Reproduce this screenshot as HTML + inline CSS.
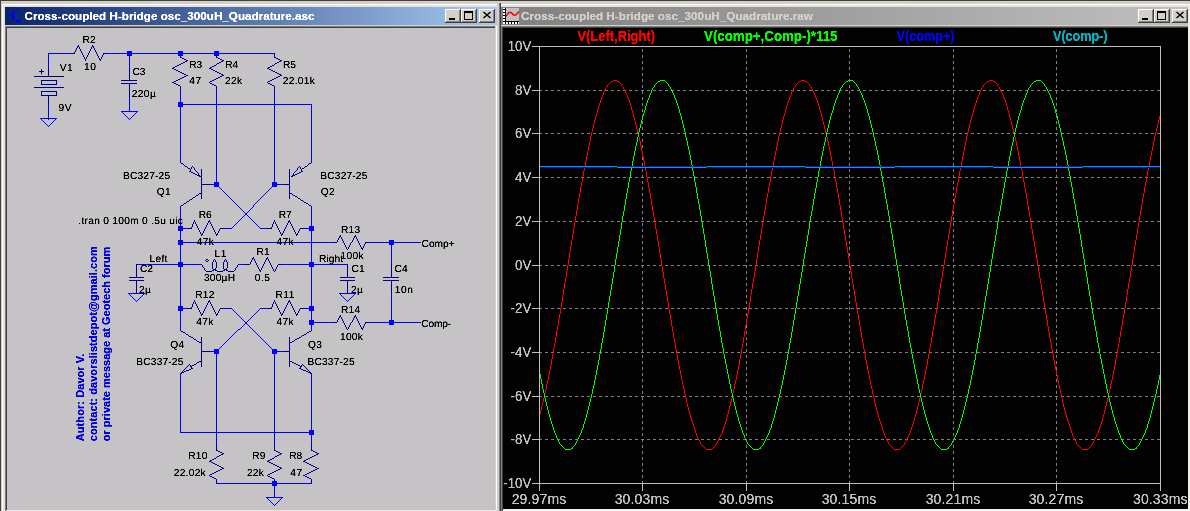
<!DOCTYPE html>
<html lang="en"><head><meta charset="utf-8"><title>LTspice - Cross-coupled H-bridge osc_300uH_Quadrature</title>
<style>
html,body{margin:0;padding:0;background:#d4d0c8;overflow:hidden}
svg{display:block;will-change:transform}
text{font-family:"Liberation Sans",sans-serif}
.lbl{font-size:10.2px;fill:#000;text-rendering:geometricPrecision}
.ttl{font-size:11px;font-weight:bold}
.ax{font-size:14px;fill:#c0c0c0}
.lg{font-size:14px;font-weight:bold}
.auth{font-size:11px;font-weight:bold;fill:#0000e0}
</style></head><body>
<svg width="1190" height="511" viewBox="0 0 1190 511">
<defs>
<linearGradient id="ga" x1="0" x2="1" y1="0" y2="0"><stop offset="0" stop-color="#0a246a"/><stop offset="1" stop-color="#a6caf0"/></linearGradient>
<linearGradient id="gi" x1="0" x2="1" y1="0" y2="0"><stop offset="0" stop-color="#808080"/><stop offset="1" stop-color="#c0c0c0"/></linearGradient>
<filter id="th" x="0" y="0" width="1190" height="511" filterUnits="userSpaceOnUse" color-interpolation-filters="sRGB"><feComponentTransfer><feFuncA type="linear" slope="1.7" intercept="-0.1"/></feComponentTransfer></filter>
</defs>
<rect x="0" y="0" width="1190" height="511" fill="#d4d0c8"/>
<g shape-rendering="crispEdges">
<rect x="0" y="0" width="1190" height="1" fill="#404040"/>
<rect x="0" y="0" width="1" height="511" fill="#404040"/>
<rect x="1" y="1" width="498" height="510" fill="#d4d0c8"/>
<rect x="2" y="4" width="495" height="1" fill="#ffffff"/>
<rect x="2" y="4" width="1" height="507" fill="#ffffff"/>
<rect x="3" y="5" width="494" height="2" fill="#e6e3dc"/>
<rect x="3" y="5" width="2" height="506" fill="#e6e3dc"/>
<rect x="499" y="3" width="1" height="508" fill="#808080"/>
<rect x="500" y="3" width="1" height="508" fill="#404040"/>
<rect x="5" y="7" width="492" height="18" fill="url(#ga)"/>
<rect x="5" y="26" width="492" height="485" fill="#808080"/>
<rect x="6" y="27" width="491" height="484" fill="#404040"/>
<rect x="495" y="26" width="1" height="485" fill="#d4d0c8"/><rect x="496" y="26" width="1" height="485" fill="#ffffff"/>
<rect x="7" y="28" width="488" height="481.5" fill="#c6c3c6"/>
<rect x="6" y="509.5" width="491" height="2" fill="#e8e6e0"/>
<rect x="501" y="1" width="689" height="510" fill="#d4d0c8"/>
<rect x="501" y="4" width="689" height="1" fill="#ffffff"/>
<rect x="501" y="5" width="689" height="2" fill="#e6e3dc"/>
<rect x="501" y="7" width="687" height="18" fill="url(#gi)"/>
<rect x="501" y="26" width="689" height="1" fill="#808080"/>
<rect x="501" y="27" width="689" height="1" fill="#404040"/>
<rect x="501" y="26" width="1" height="485" fill="#808080"/>
<rect x="502" y="27" width="1" height="484" fill="#404040"/>
<rect x="503" y="28" width="685" height="481" fill="#020202"/>
<rect x="1188" y="7" width="2" height="504" fill="#f0efea"/>
<rect x="503" y="509" width="687" height="2" fill="#f4f4f0"/>
<rect x="445" y="9" width="16" height="14" fill="#404040"/><rect x="445" y="9" width="15" height="13" fill="#ffffff"/><rect x="446" y="10" width="14" height="12" fill="#808080"/><rect x="446" y="10" width="13" height="11" fill="#d4d0c8"/>
<rect x="461" y="9" width="16" height="14" fill="#404040"/><rect x="461" y="9" width="15" height="13" fill="#ffffff"/><rect x="462" y="10" width="14" height="12" fill="#808080"/><rect x="462" y="10" width="13" height="11" fill="#d4d0c8"/>
<rect x="479" y="9" width="16" height="14" fill="#404040"/><rect x="479" y="9" width="15" height="13" fill="#ffffff"/><rect x="480" y="10" width="14" height="12" fill="#808080"/><rect x="480" y="10" width="13" height="11" fill="#d4d0c8"/>
<rect x="1138" y="9" width="16" height="14" fill="#404040"/><rect x="1138" y="9" width="15" height="13" fill="#ffffff"/><rect x="1139" y="10" width="14" height="12" fill="#808080"/><rect x="1139" y="10" width="13" height="11" fill="#d4d0c8"/>
<rect x="1154" y="9" width="16" height="14" fill="#404040"/><rect x="1154" y="9" width="15" height="13" fill="#ffffff"/><rect x="1155" y="10" width="14" height="12" fill="#808080"/><rect x="1155" y="10" width="13" height="11" fill="#d4d0c8"/>
<rect x="1172" y="9" width="16" height="14" fill="#404040"/><rect x="1172" y="9" width="15" height="13" fill="#ffffff"/><rect x="1173" y="10" width="14" height="12" fill="#808080"/><rect x="1173" y="10" width="13" height="11" fill="#d4d0c8"/>
<rect x="449" y="18" width="6" height="2" fill="#000"/>
<rect x="1142" y="18" width="6" height="2" fill="#000"/>
<rect x="464" y="11" width="9" height="9" fill="#000"/><rect x="465" y="13" width="7" height="6" fill="#d4d0c8"/>
<rect x="1157" y="11" width="9" height="9" fill="#000"/><rect x="1158" y="13" width="7" height="6" fill="#d4d0c8"/>
</g>
<path d="M483.5 12 l7 6 M490.5 12 l-7 6" stroke="#000" stroke-width="1.5" fill="none"/>
<path d="M1176.5 12 l7 6 M1183.5 12 l-7 6" stroke="#000" stroke-width="1.5" fill="none"/>
<g stroke="#0000ff" fill="none" shape-rendering="crispEdges"><path d="M9 15.5H13" stroke-width="1"/><path d="M13 11V20" stroke-width="2"/><path d="M14 13L19 8" stroke-width="1"/><path d="M14 18L20 24" stroke-width="1"/><path d="M16 21.5h3v-3" stroke-width="1"/><path d="M17 20.5h2" stroke-width="1"/></g>
<text class="ttl" filter="url(#th)" x="24.5" y="20" fill="#fff" textLength="290" lengthAdjust="spacingAndGlyphs">Cross-coupled H-bridge osc_300uH_Quadrature.asc</text>
<g shape-rendering="crispEdges"><rect x="503" y="8" width="16" height="16" fill="#fff"/><rect x="506" y="8" width="13" height="13" fill="#c0c0c0"/>
<path fill="#000" d="M505 8h1v16h-1zM503 21h16v1h-16zM503 9h2v1h-2zM503 12h2v1h-2zM503 15h2v1h-2zM503 18h2v1h-2zM508 22h1v2h-1zM511 22h1v2h-1zM514 22h1v2h-1zM517 22h1v2h-1z"/></g>
<path d="M506 16.4L508.8 12.5H511L513.5 14.9H515.8L519 11.4" stroke="#ff0000" stroke-width="1.5" fill="none"/>
<text class="ttl" filter="url(#th)" x="521" y="20" fill="#d4d0c8" textLength="292" lengthAdjust="spacingAndGlyphs">Cross-coupled H-bridge osc_300uH_Quadrature.raw</text>
<g shape-rendering="crispEdges" stroke="none">
<path fill="#000080" d="M77 46h2v1h-2zM92 46h2v1h-2zM71 53h4v1h-4zM103 53h4v1h-4zM180 57h2v1h-2zM216 57h2v1h-2zM274 57h2v1h-2zM182 58h2v1h-2zM218 58h2v1h-2zM276 58h2v1h-2zM99 59h2v1h-2zM184 59h2v1h-2zM220 59h2v1h-2zM278 59h2v1h-2zM186 60h2v1h-2zM222 60h2v1h-2zM280 60h2v1h-2zM185 61h2v1h-2zM221 61h2v1h-2zM279 61h2v1h-2zM183 62h2v1h-2zM219 62h2v1h-2zM277 62h2v1h-2zM181 63h2v1h-2zM217 63h2v1h-2zM275 63h2v1h-2zM179 64h2v1h-2zM177 65h2v1h-2zM214 65h2v1h-2zM272 65h2v1h-2zM175 66h2v1h-2zM212 66h2v1h-2zM270 66h2v1h-2zM173 67h2v1h-2zM210 67h2v1h-2zM268 67h2v1h-2zM172 68h2v1h-2zM209 68h2v1h-2zM267 68h2v1h-2zM174 69h2v1h-2zM211 69h2v1h-2zM269 69h2v1h-2zM176 70h2v1h-2zM213 70h2v1h-2zM271 70h2v1h-2zM178 71h2v1h-2zM215 71h2v1h-2zM273 71h2v1h-2zM180 72h2v1h-2zM217 72h2v1h-2zM275 72h2v1h-2zM182 73h2v1h-2zM219 73h2v1h-2zM277 73h2v1h-2zM184 74h2v1h-2zM221 74h2v1h-2zM279 74h2v1h-2zM186 75h2v1h-2zM222 75h2v1h-2zM280 75h2v1h-2zM34 76h30v1h-30zM184 76h2v1h-2zM220 76h2v1h-2zM278 76h2v1h-2zM182 77h2v1h-2zM218 77h2v1h-2zM276 77h2v1h-2zM180 78h2v1h-2zM216 78h2v1h-2zM274 78h2v1h-2zM178 79h2v1h-2zM214 79h2v1h-2zM272 79h2v1h-2zM41 80h16v1h-16zM121 80h16v1h-16zM176 80h2v1h-2zM212 80h2v1h-2zM270 80h2v1h-2zM174 81h2v1h-2zM210 81h2v1h-2zM268 81h2v1h-2zM172 82h2v1h-2zM121 83h16v1h-16zM174 83h2v1h-2zM210 83h2v1h-2zM268 83h2v1h-2zM41 84h16v1h-16zM176 84h2v1h-2zM212 84h2v1h-2zM270 84h2v1h-2zM178 85h2v1h-2zM214 85h2v1h-2zM272 85h2v1h-2zM34 87h30v1h-30zM41 91h16v1h-16zM41 95h16v1h-16zM181 163h2v1h-2zM309 163h2v1h-2zM185 166h2v1h-2zM305 166h2v1h-2zM188 168h2v1h-2zM302 168h2v1h-2zM189 171h2v1h-2zM301 171h2v1h-2zM191 172h2v1h-2zM299 172h2v1h-2zM193 173h2v1h-2zM297 173h2v1h-2zM195 174h2v1h-2zM295 174h2v1h-2zM197 175h3v1h-3zM292 175h3v1h-3zM199 176h3v1h-3zM291 176h2v1h-2zM201 184h8v1h-8zM283 184h7v1h-7zM199 193h3v1h-3zM289 193h3v1h-3zM196 195h2v1h-2zM293 195h2v1h-2zM295 196h2v1h-2zM193 197h2v1h-2zM298 198h2v1h-2zM190 199h2v1h-2zM301 200h2v1h-2zM187 201h2v1h-2zM304 202h2v1h-2zM184 203h2v1h-2zM306 203h2v1h-2zM181 205h2v1h-2zM309 205h2v1h-2zM208 221h2v1h-2zM288 221h2v1h-2zM188 228h4v1h-4zM220 228h4v1h-4zM267 228h5v1h-5zM300 228h4v1h-4zM201 234h2v1h-2zM216 234h2v1h-2zM281 234h2v1h-2zM296 234h2v1h-2zM339 236h2v1h-2zM354 236h2v1h-2zM333 242h4v1h-4zM365 242h4v1h-4zM361 248h2v1h-2zM252 258h2v1h-2zM266 258h2v1h-2zM206 259h2v1h-2zM206 261h2v1h-2zM245 264h5v1h-5zM278 264h4v1h-4zM213 269h3v1h-3zM224 269h3v1h-3zM212 270h2v1h-2zM215 270h2v1h-2zM223 270h2v1h-2zM226 270h2v1h-2zM259 270h2v1h-2zM206 271h6v1h-6zM217 271h6v1h-6zM228 271h6v1h-6zM129 277h15v1h-15zM340 277h15v1h-15zM383 277h16v1h-16zM129 280h15v1h-15zM340 280h15v1h-15zM383 280h16v1h-16zM208 301h2v1h-2zM288 301h2v1h-2zM187 308h5v1h-5zM220 308h3v1h-3zM268 308h4v1h-4zM300 308h4v1h-4zM201 314h2v1h-2zM216 314h2v1h-2zM281 314h2v1h-2zM296 314h2v1h-2zM339 316h2v1h-2zM354 316h2v1h-2zM333 322h4v1h-4zM365 322h4v1h-4zM361 328h2v1h-2zM181 331h2v1h-2zM309 331h2v1h-2zM183 332h2v1h-2zM307 332h2v1h-2zM186 334h2v1h-2zM304 334h2v1h-2zM302 335h2v1h-2zM189 336h2v1h-2zM191 337h2v1h-2zM299 337h2v1h-2zM297 338h2v1h-2zM194 339h2v1h-2zM295 339h2v1h-2zM197 341h2v1h-2zM292 341h2v1h-2zM199 342h3v1h-3zM289 342h3v1h-3zM201 351h8v1h-8zM283 351h7v1h-7zM199 361h3v1h-3zM289 361h3v1h-3zM197 362h2v1h-2zM292 362h2v1h-2zM294 363h2v1h-2zM194 364h2v1h-2zM296 364h2v1h-2zM192 365h2v1h-2zM298 365h2v1h-2zM190 366h2v1h-2zM300 366h2v1h-2zM191 368h2v1h-2zM299 368h2v1h-2zM189 369h2v1h-2zM301 369h2v1h-2zM186 370h3v1h-3zM303 370h3v1h-3zM184 371h2v1h-2zM306 371h2v1h-2zM181 372h3v1h-3zM308 372h3v1h-3zM216 450h2v1h-2zM274 450h2v1h-2zM311 450h2v1h-2zM218 451h2v1h-2zM276 451h2v1h-2zM313 451h2v1h-2zM220 452h2v1h-2zM278 452h2v1h-2zM315 452h2v1h-2zM222 453h2v1h-2zM280 453h2v1h-2zM317 453h2v1h-2zM221 454h2v1h-2zM279 454h2v1h-2zM316 454h2v1h-2zM219 455h2v1h-2zM277 455h2v1h-2zM314 455h2v1h-2zM217 456h2v1h-2zM275 456h2v1h-2zM312 456h2v1h-2zM310 457h2v1h-2zM214 458h2v1h-2zM272 458h2v1h-2zM308 458h2v1h-2zM212 459h2v1h-2zM270 459h2v1h-2zM306 459h2v1h-2zM210 460h2v1h-2zM268 460h2v1h-2zM304 460h2v1h-2zM209 461h2v1h-2zM267 461h2v1h-2zM303 461h2v1h-2zM211 462h2v1h-2zM269 462h2v1h-2zM305 462h2v1h-2zM213 463h2v1h-2zM271 463h2v1h-2zM307 463h2v1h-2zM215 464h2v1h-2zM273 464h2v1h-2zM309 464h2v1h-2zM217 465h2v1h-2zM275 465h2v1h-2zM311 465h2v1h-2zM219 466h2v1h-2zM277 466h2v1h-2zM313 466h2v1h-2zM221 467h2v1h-2zM279 467h2v1h-2zM315 467h2v1h-2zM222 468h2v1h-2zM280 468h2v1h-2zM317 468h2v1h-2zM220 469h2v1h-2zM278 469h2v1h-2zM315 469h2v1h-2zM218 470h2v1h-2zM276 470h2v1h-2zM313 470h2v1h-2zM216 471h2v1h-2zM274 471h2v1h-2zM311 471h2v1h-2zM214 472h2v1h-2zM272 472h2v1h-2zM309 472h2v1h-2zM212 473h2v1h-2zM270 473h2v1h-2zM307 473h2v1h-2zM210 474h2v1h-2zM268 474h2v1h-2zM305 474h2v1h-2zM303 475h2v1h-2zM210 476h2v1h-2zM268 476h2v1h-2zM305 476h2v1h-2zM212 477h2v1h-2zM270 477h2v1h-2zM307 477h2v1h-2zM214 478h2v1h-2zM272 478h2v1h-2zM309 478h2v1h-2zM41 81h1v3h-1zM41 92h1v3h-1zM48 68h1v8h-1zM48 96h1v8h-1zM56 81h1v3h-1zM56 92h1v3h-1zM74 52h1v1h-1zM75 50h1v2h-1zM76 48h1v2h-1zM77 47h1v1h-1zM78 45h1v1h-1zM79 47h1v2h-1zM80 49h1v2h-1zM81 51h1v2h-1zM82 53h1v2h-1zM83 55h1v2h-1zM84 57h1v2h-1zM85 59h1v2h-1zM86 57h1v2h-1zM87 55h1v2h-1zM88 53h1v2h-1zM89 51h1v2h-1zM90 49h1v2h-1zM91 47h1v2h-1zM92 45h1v1h-1zM93 47h1v1h-1zM94 48h1v2h-1zM95 50h1v2h-1zM96 52h1v2h-1zM97 54h1v2h-1zM98 56h1v2h-1zM99 58h1v1h-1zM100 60h1v1h-1zM101 57h1v2h-1zM102 55h1v2h-1zM103 54h1v1h-1zM129 68h1v12h-1zM129 84h1v13h-1zM136 264h1v13h-1zM136 281h1v12h-1zM180 56h1v1h-1zM180 86h1v3h-1zM180 162h1v1h-1zM180 330h1v1h-1zM181 373h1v1h-1zM182 371h1v1h-1zM183 164h1v1h-1zM183 204h1v1h-1zM183 370h1v1h-1zM184 165h1v1h-1zM184 369h1v1h-1zM185 333h1v1h-1zM185 368h1v1h-1zM186 202h1v1h-1zM186 367h1v1h-1zM187 167h1v1h-1zM187 366h1v1h-1zM188 335h1v1h-1zM188 365h1v1h-1zM189 200h1v1h-1zM189 364h1v1h-1zM190 169h1v2h-1zM190 365h1v1h-1zM191 167h1v2h-1zM191 227h1v1h-1zM191 307h1v1h-1zM191 367h1v1h-1zM192 166h1v1h-1zM192 198h1v1h-1zM192 224h1v3h-1zM192 304h1v3h-1zM193 167h1v1h-1zM193 222h1v2h-1zM193 302h1v2h-1zM193 338h1v1h-1zM194 168h1v2h-1zM194 220h1v2h-1zM194 300h1v2h-1zM195 170h1v1h-1zM195 196h1v1h-1zM195 222h1v2h-1zM195 302h1v2h-1zM196 171h1v1h-1zM196 224h1v2h-1zM196 304h1v2h-1zM196 340h1v1h-1zM196 363h1v1h-1zM197 172h1v1h-1zM197 226h1v2h-1zM197 306h1v2h-1zM198 173h1v2h-1zM198 194h1v1h-1zM198 228h1v2h-1zM198 308h1v2h-1zM199 230h1v2h-1zM199 310h1v2h-1zM200 232h1v2h-1zM200 312h1v2h-1zM201 169h1v7h-1zM201 177h1v7h-1zM201 185h1v8h-1zM201 194h1v5h-1zM201 235h1v1h-1zM201 315h1v1h-1zM201 337h1v5h-1zM201 343h1v8h-1zM201 352h1v9h-1zM201 362h1v5h-1zM202 233h1v1h-1zM202 265h1v2h-1zM202 313h1v1h-1zM203 231h1v2h-1zM203 267h1v1h-1zM203 311h1v2h-1zM204 229h1v2h-1zM204 268h1v2h-1zM204 309h1v2h-1zM205 227h1v2h-1zM205 260h1v1h-1zM205 270h1v1h-1zM205 307h1v2h-1zM206 225h1v2h-1zM206 305h1v2h-1zM207 223h1v2h-1zM207 303h1v2h-1zM208 222h1v1h-1zM208 260h1v1h-1zM208 302h1v1h-1zM209 82h1v1h-1zM209 220h1v1h-1zM209 300h1v1h-1zM209 475h1v1h-1zM210 222h1v2h-1zM210 302h1v2h-1zM211 224h1v2h-1zM211 304h1v2h-1zM212 226h1v2h-1zM212 262h1v7h-1zM212 306h1v2h-1zM213 228h1v2h-1zM213 260h1v2h-1zM213 308h1v2h-1zM214 230h1v2h-1zM214 259h1v1h-1zM214 310h1v2h-1zM215 232h1v2h-1zM215 260h1v2h-1zM215 268h1v1h-1zM215 312h1v2h-1zM216 56h1v1h-1zM216 64h1v1h-1zM216 86h1v3h-1zM216 235h1v1h-1zM216 262h1v6h-1zM216 315h1v1h-1zM216 446h1v4h-1zM216 457h1v1h-1zM216 479h1v4h-1zM217 233h1v1h-1zM217 313h1v1h-1zM218 231h1v2h-1zM218 311h1v2h-1zM219 229h1v2h-1zM219 309h1v2h-1zM223 262h1v7h-1zM224 260h1v2h-1zM225 259h1v1h-1zM226 260h1v2h-1zM226 268h1v1h-1zM227 262h1v6h-1zM234 270h1v1h-1zM235 268h1v2h-1zM236 267h1v1h-1zM237 265h1v2h-1zM238 264h1v1h-1zM250 262h1v2h-1zM251 260h1v2h-1zM252 259h1v1h-1zM253 257h1v1h-1zM254 259h1v2h-1zM255 261h1v2h-1zM256 263h1v2h-1zM257 265h1v2h-1zM258 267h1v2h-1zM259 269h1v1h-1zM260 271h1v1h-1zM261 268h1v2h-1zM262 266h1v2h-1zM263 264h1v2h-1zM264 262h1v2h-1zM265 260h1v2h-1zM266 259h1v1h-1zM267 82h1v1h-1zM267 257h1v1h-1zM267 475h1v1h-1zM268 259h1v2h-1zM269 261h1v2h-1zM270 263h1v2h-1zM271 227h1v1h-1zM271 265h1v2h-1zM271 307h1v1h-1zM272 224h1v3h-1zM272 267h1v2h-1zM272 304h1v3h-1zM273 222h1v2h-1zM273 269h1v2h-1zM273 302h1v2h-1zM274 53h1v4h-1zM274 64h1v1h-1zM274 86h1v3h-1zM274 220h1v2h-1zM274 271h1v1h-1zM274 300h1v2h-1zM274 446h1v4h-1zM274 457h1v1h-1zM274 479h1v2h-1zM275 222h1v2h-1zM275 269h1v2h-1zM275 302h1v2h-1zM276 224h1v2h-1zM276 267h1v2h-1zM276 304h1v2h-1zM277 226h1v2h-1zM277 265h1v2h-1zM277 306h1v2h-1zM278 228h1v2h-1zM278 308h1v2h-1zM279 230h1v2h-1zM279 310h1v2h-1zM280 232h1v2h-1zM280 312h1v2h-1zM281 235h1v1h-1zM281 315h1v1h-1zM282 233h1v1h-1zM282 313h1v1h-1zM283 231h1v2h-1zM283 311h1v2h-1zM284 229h1v2h-1zM284 309h1v2h-1zM285 227h1v2h-1zM285 307h1v2h-1zM286 225h1v2h-1zM286 305h1v2h-1zM287 223h1v2h-1zM287 303h1v2h-1zM288 222h1v1h-1zM288 302h1v1h-1zM289 169h1v15h-1zM289 185h1v8h-1zM289 194h1v5h-1zM289 220h1v1h-1zM289 300h1v1h-1zM289 337h1v5h-1zM289 343h1v8h-1zM289 352h1v9h-1zM289 362h1v5h-1zM290 222h1v2h-1zM290 302h1v2h-1zM291 224h1v2h-1zM291 304h1v2h-1zM292 194h1v1h-1zM292 226h1v2h-1zM292 306h1v2h-1zM293 173h1v2h-1zM293 228h1v2h-1zM293 308h1v2h-1zM294 172h1v1h-1zM294 230h1v2h-1zM294 310h1v2h-1zM294 340h1v1h-1zM295 171h1v1h-1zM295 232h1v2h-1zM295 312h1v2h-1zM296 170h1v1h-1zM296 235h1v1h-1zM296 315h1v1h-1zM297 168h1v2h-1zM297 197h1v1h-1zM297 233h1v1h-1zM297 313h1v1h-1zM298 167h1v1h-1zM298 231h1v2h-1zM298 311h1v2h-1zM299 166h1v1h-1zM299 229h1v2h-1zM299 309h1v2h-1zM300 167h1v2h-1zM300 199h1v1h-1zM300 367h1v1h-1zM301 169h1v2h-1zM301 336h1v1h-1zM301 365h1v1h-1zM302 364h1v1h-1zM303 201h1v1h-1zM303 365h1v1h-1zM304 167h1v1h-1zM304 366h1v1h-1zM305 367h1v1h-1zM306 333h1v1h-1zM306 368h1v1h-1zM307 165h1v1h-1zM307 369h1v1h-1zM308 164h1v1h-1zM308 204h1v1h-1zM308 370h1v1h-1zM309 371h1v1h-1zM310 373h1v1h-1zM311 162h1v1h-1zM311 330h1v1h-1zM311 446h1v4h-1zM311 479h1v4h-1zM337 240h1v2h-1zM337 320h1v2h-1zM338 238h1v2h-1zM338 318h1v2h-1zM339 237h1v1h-1zM339 317h1v1h-1zM340 235h1v1h-1zM340 315h1v1h-1zM341 237h1v2h-1zM341 317h1v2h-1zM342 239h1v2h-1zM342 319h1v2h-1zM343 241h1v2h-1zM343 321h1v2h-1zM344 243h1v2h-1zM344 323h1v2h-1zM345 245h1v2h-1zM345 325h1v2h-1zM346 247h1v2h-1zM346 327h1v2h-1zM347 249h1v1h-1zM347 264h1v13h-1zM347 281h1v12h-1zM347 329h1v1h-1zM348 247h1v2h-1zM348 327h1v2h-1zM349 245h1v2h-1zM349 325h1v2h-1zM350 243h1v2h-1zM350 323h1v2h-1zM351 242h1v1h-1zM351 322h1v1h-1zM352 240h1v2h-1zM352 320h1v2h-1zM353 238h1v2h-1zM353 318h1v2h-1zM354 237h1v1h-1zM354 317h1v1h-1zM355 235h1v1h-1zM355 315h1v1h-1zM356 237h1v2h-1zM356 317h1v2h-1zM357 239h1v2h-1zM357 319h1v2h-1zM358 241h1v2h-1zM358 321h1v2h-1zM359 243h1v2h-1zM359 323h1v2h-1zM360 245h1v2h-1zM360 325h1v2h-1zM361 247h1v1h-1zM361 327h1v1h-1zM362 249h1v1h-1zM362 329h1v1h-1zM363 246h1v2h-1zM363 326h1v2h-1zM364 244h1v2h-1zM364 324h1v2h-1zM365 243h1v1h-1zM365 323h1v1h-1zM391 264h1v13h-1zM391 281h1v12h-1z"/>
<path fill="#0000ff" d="M127 51h5v1h-5zM178 51h5v1h-5zM214 51h5v1h-5zM127 52h5v1h-5zM178 52h5v1h-5zM214 52h5v1h-5zM48 53h23v1h-23zM107 53h167v1h-167zM127 54h5v1h-5zM178 54h5v1h-5zM214 54h5v1h-5zM127 55h5v1h-5zM178 55h5v1h-5zM214 55h5v1h-5zM178 102h5v1h-5zM178 103h5v1h-5zM178 104h134v1h-134zM178 105h5v1h-5zM178 106h5v1h-5zM121 111h17v1h-17zM40 118h17v1h-17zM214 182h5v1h-5zM272 182h5v1h-5zM214 183h5v1h-5zM272 183h5v1h-5zM209 184h10v1h-10zM272 184h11v1h-11zM214 185h5v1h-5zM272 185h5v1h-5zM214 186h5v1h-5zM272 186h5v1h-5zM245 213h2v1h-2zM245 214h2v1h-2zM178 226h5v1h-5zM309 226h5v1h-5zM178 227h5v1h-5zM309 227h5v1h-5zM178 228h10v1h-10zM224 228h8v1h-8zM260 228h7v1h-7zM304 228h10v1h-10zM178 229h5v1h-5zM309 229h5v1h-5zM178 230h5v1h-5zM309 230h5v1h-5zM178 240h5v1h-5zM389 240h5v1h-5zM178 241h5v1h-5zM389 241h5v1h-5zM178 242h155v1h-155zM369 242h52v1h-52zM178 243h5v1h-5zM389 243h5v1h-5zM178 244h5v1h-5zM389 244h5v1h-5zM178 262h5v1h-5zM309 262h5v1h-5zM178 263h5v1h-5zM309 263h5v1h-5zM137 264h65v1h-65zM239 264h6v1h-6zM282 264h65v1h-65zM178 265h5v1h-5zM309 265h5v1h-5zM178 266h5v1h-5zM309 266h5v1h-5zM128 293h17v1h-17zM339 293h17v1h-17zM178 306h5v1h-5zM309 306h5v1h-5zM178 307h5v1h-5zM309 307h5v1h-5zM178 308h9v1h-9zM223 308h9v1h-9zM260 308h8v1h-8zM304 308h10v1h-10zM178 309h5v1h-5zM309 309h5v1h-5zM178 310h5v1h-5zM309 310h5v1h-5zM309 320h5v1h-5zM389 320h5v1h-5zM309 321h5v1h-5zM389 321h5v1h-5zM245 322h2v1h-2zM309 322h24v1h-24zM369 322h52v1h-52zM245 323h2v1h-2zM309 323h5v1h-5zM389 323h5v1h-5zM309 324h5v1h-5zM389 324h5v1h-5zM238 329h2v1h-2zM214 349h5v1h-5zM272 349h5v1h-5zM214 350h5v1h-5zM272 350h5v1h-5zM209 351h10v1h-10zM272 351h11v1h-11zM214 352h5v1h-5zM272 352h5v1h-5zM214 353h5v1h-5zM272 353h5v1h-5zM309 430h5v1h-5zM309 431h5v1h-5zM180 432h134v1h-134zM309 433h5v1h-5zM309 434h5v1h-5zM272 481h5v1h-5zM272 482h5v1h-5zM216 483h96v1h-96zM272 484h5v1h-5zM272 485h5v1h-5zM266 497h17v1h-17zM41 119h1v1h-1zM42 120h1v1h-1zM43 121h1v1h-1zM44 122h1v1h-1zM45 123h1v1h-1zM46 124h1v1h-1zM47 125h1v1h-1zM48 54h1v14h-1zM48 104h1v14h-1zM48 119h1v1h-1zM48 126h1v1h-1zM49 125h1v1h-1zM50 124h1v1h-1zM51 123h1v1h-1zM52 122h1v1h-1zM53 121h1v1h-1zM54 120h1v1h-1zM55 119h1v1h-1zM122 112h1v1h-1zM123 113h1v1h-1zM124 114h1v1h-1zM125 115h1v1h-1zM126 116h1v1h-1zM127 117h1v1h-1zM128 118h1v1h-1zM129 56h1v12h-1zM129 97h1v14h-1zM129 119h1v1h-1zM129 294h1v1h-1zM130 118h1v1h-1zM130 295h1v1h-1zM131 117h1v1h-1zM131 296h1v1h-1zM132 116h1v1h-1zM132 297h1v1h-1zM133 115h1v1h-1zM133 298h1v1h-1zM134 114h1v1h-1zM134 299h1v1h-1zM135 113h1v1h-1zM135 300h1v1h-1zM136 112h1v1h-1zM136 301h1v1h-1zM137 300h1v1h-1zM138 299h1v1h-1zM139 298h1v1h-1zM140 297h1v1h-1zM141 296h1v1h-1zM142 295h1v1h-1zM143 294h1v1h-1zM180 89h1v13h-1zM180 107h1v55h-1zM180 206h1v20h-1zM180 231h1v9h-1zM180 245h1v17h-1zM180 267h1v39h-1zM180 311h1v19h-1zM180 373h1v59h-1zM216 89h1v15h-1zM216 105h1v77h-1zM216 354h1v78h-1zM216 433h1v13h-1zM219 187h1v1h-1zM219 348h1v1h-1zM220 188h1v1h-1zM220 347h1v1h-1zM221 189h1v1h-1zM221 346h1v1h-1zM222 190h1v1h-1zM222 345h1v1h-1zM223 191h1v1h-1zM223 344h1v1h-1zM224 192h1v1h-1zM224 343h1v1h-1zM225 193h1v1h-1zM225 342h1v1h-1zM226 194h1v1h-1zM226 341h1v1h-1zM227 195h1v1h-1zM227 340h1v1h-1zM228 196h1v1h-1zM228 339h1v1h-1zM229 197h1v1h-1zM229 338h1v1h-1zM230 198h1v1h-1zM230 337h1v1h-1zM231 199h1v1h-1zM231 336h1v1h-1zM232 200h1v1h-1zM232 227h1v1h-1zM232 309h1v1h-1zM232 335h1v1h-1zM233 201h1v1h-1zM233 226h1v1h-1zM233 310h1v1h-1zM233 334h1v1h-1zM234 202h1v1h-1zM234 225h1v1h-1zM234 311h1v1h-1zM234 333h1v1h-1zM235 203h1v1h-1zM235 224h1v1h-1zM235 312h1v1h-1zM235 332h1v1h-1zM236 204h1v1h-1zM236 223h1v1h-1zM236 313h1v1h-1zM236 331h1v1h-1zM237 205h1v1h-1zM237 222h1v1h-1zM237 314h1v1h-1zM237 330h1v1h-1zM238 206h1v1h-1zM238 221h1v1h-1zM238 315h1v1h-1zM239 207h1v1h-1zM239 220h1v1h-1zM239 316h1v1h-1zM240 208h1v1h-1zM240 219h1v1h-1zM240 317h1v1h-1zM240 328h1v1h-1zM241 209h1v1h-1zM241 218h1v1h-1zM241 318h1v1h-1zM241 327h1v1h-1zM242 210h1v1h-1zM242 217h1v1h-1zM242 319h1v1h-1zM242 326h1v1h-1zM243 211h1v1h-1zM243 216h1v1h-1zM243 320h1v1h-1zM243 325h1v1h-1zM244 212h1v1h-1zM244 215h1v1h-1zM244 321h1v1h-1zM244 324h1v1h-1zM247 212h1v1h-1zM247 215h1v1h-1zM247 321h1v1h-1zM247 324h1v1h-1zM248 211h1v1h-1zM248 216h1v1h-1zM248 320h1v1h-1zM248 325h1v1h-1zM249 210h1v1h-1zM249 217h1v1h-1zM249 319h1v1h-1zM249 326h1v1h-1zM250 209h1v1h-1zM250 218h1v1h-1zM250 318h1v1h-1zM250 327h1v1h-1zM251 208h1v1h-1zM251 219h1v1h-1zM251 317h1v1h-1zM251 328h1v1h-1zM252 207h1v1h-1zM252 220h1v1h-1zM252 316h1v1h-1zM252 329h1v1h-1zM253 205h1v2h-1zM253 221h1v1h-1zM253 315h1v1h-1zM253 330h1v1h-1zM254 204h1v1h-1zM254 222h1v1h-1zM254 314h1v1h-1zM254 331h1v1h-1zM255 203h1v1h-1zM255 223h1v1h-1zM255 313h1v1h-1zM255 332h1v1h-1zM256 202h1v1h-1zM256 224h1v1h-1zM256 312h1v1h-1zM256 333h1v1h-1zM257 201h1v1h-1zM257 225h1v1h-1zM257 311h1v1h-1zM257 334h1v1h-1zM258 200h1v1h-1zM258 226h1v1h-1zM258 310h1v1h-1zM258 335h1v1h-1zM259 199h1v1h-1zM259 227h1v1h-1zM259 309h1v1h-1zM259 336h1v1h-1zM260 198h1v1h-1zM260 337h1v1h-1zM261 197h1v1h-1zM261 338h1v1h-1zM262 196h1v1h-1zM262 339h1v1h-1zM263 195h1v1h-1zM263 340h1v1h-1zM264 194h1v1h-1zM264 341h1v1h-1zM265 193h1v1h-1zM265 342h1v1h-1zM266 192h1v1h-1zM266 343h1v1h-1zM267 191h1v1h-1zM267 344h1v1h-1zM267 498h1v1h-1zM268 190h1v1h-1zM268 345h1v1h-1zM268 499h1v1h-1zM269 189h1v1h-1zM269 346h1v1h-1zM269 500h1v1h-1zM270 188h1v1h-1zM270 347h1v1h-1zM270 501h1v1h-1zM271 187h1v1h-1zM271 348h1v1h-1zM271 502h1v1h-1zM272 503h1v1h-1zM273 504h1v1h-1zM274 89h1v15h-1zM274 105h1v77h-1zM274 354h1v78h-1zM274 433h1v13h-1zM274 486h1v11h-1zM274 505h1v1h-1zM275 504h1v1h-1zM276 503h1v1h-1zM277 502h1v1h-1zM278 501h1v1h-1zM279 500h1v1h-1zM280 499h1v1h-1zM281 498h1v1h-1zM311 105h1v57h-1zM311 206h1v20h-1zM311 231h1v11h-1zM311 243h1v19h-1zM311 267h1v39h-1zM311 311h1v9h-1zM311 325h1v5h-1zM311 373h1v57h-1zM311 435h1v11h-1zM340 294h1v1h-1zM341 295h1v1h-1zM342 296h1v1h-1zM343 297h1v1h-1zM344 298h1v1h-1zM345 299h1v1h-1zM346 300h1v1h-1zM347 301h1v1h-1zM348 300h1v1h-1zM349 299h1v1h-1zM350 298h1v1h-1zM351 297h1v1h-1zM352 296h1v1h-1zM353 295h1v1h-1zM354 294h1v1h-1zM391 245h1v19h-1zM391 293h1v27h-1z"/>
<path fill="#808080" d="M539 90h3v1h-3zM545 90h3v1h-3zM551 90h3v1h-3zM557 90h3v1h-3zM563 90h3v1h-3zM569 90h3v1h-3zM575 90h3v1h-3zM581 90h3v1h-3zM587 90h3v1h-3zM593 90h3v1h-3zM599 90h3v1h-3zM605 90h3v1h-3zM611 90h3v1h-3zM617 90h3v1h-3zM629 90h3v1h-3zM635 90h3v1h-3zM641 90h3v1h-3zM647 90h3v1h-3zM653 90h3v1h-3zM659 90h3v1h-3zM665 90h3v1h-3zM672 90h2v1h-2zM677 90h3v1h-3zM683 90h3v1h-3zM689 90h3v1h-3zM695 90h3v1h-3zM701 90h3v1h-3zM707 90h3v1h-3zM713 90h3v1h-3zM719 90h3v1h-3zM725 90h3v1h-3zM731 90h3v1h-3zM737 90h3v1h-3zM743 90h3v1h-3zM749 90h3v1h-3zM755 90h3v1h-3zM761 90h3v1h-3zM767 90h3v1h-3zM773 90h3v1h-3zM779 90h3v1h-3zM785 90h3v1h-3zM797 90h3v1h-3zM803 90h3v1h-3zM809 90h3v1h-3zM815 90h3v1h-3zM821 90h3v1h-3zM827 90h3v1h-3zM833 90h3v1h-3zM840 90h2v1h-2zM845 90h3v1h-3zM851 90h3v1h-3zM857 90h2v1h-2zM863 90h3v1h-3zM869 90h3v1h-3zM875 90h3v1h-3zM881 90h3v1h-3zM887 90h3v1h-3zM893 90h3v1h-3zM899 90h3v1h-3zM905 90h3v1h-3zM911 90h3v1h-3zM917 90h3v1h-3zM923 90h3v1h-3zM929 90h3v1h-3zM935 90h3v1h-3zM941 90h3v1h-3zM947 90h3v1h-3zM953 90h3v1h-3zM959 90h3v1h-3zM965 90h3v1h-3zM971 90h3v1h-3zM977 90h3v1h-3zM983 90h3v1h-3zM989 90h3v1h-3zM995 90h3v1h-3zM1001 90h3v1h-3zM1007 90h3v1h-3zM1013 90h3v1h-3zM1019 90h3v1h-3zM1025 90h2v1h-2zM1031 90h3v1h-3zM1037 90h3v1h-3zM1043 90h3v1h-3zM1049 90h3v1h-3zM1055 90h3v1h-3zM1061 90h3v1h-3zM1067 90h3v1h-3zM1073 90h3v1h-3zM1079 90h3v1h-3zM1085 90h3v1h-3zM1091 90h3v1h-3zM1097 90h3v1h-3zM1103 90h3v1h-3zM1109 90h3v1h-3zM1115 90h3v1h-3zM1121 90h3v1h-3zM1127 90h3v1h-3zM1133 90h3v1h-3zM1139 90h3v1h-3zM1145 90h3v1h-3zM1151 90h3v1h-3zM1157 90h3v1h-3zM539 133h3v1h-3zM545 133h3v1h-3zM551 133h3v1h-3zM557 133h3v1h-3zM563 133h3v1h-3zM569 133h3v1h-3zM575 133h3v1h-3zM581 133h3v1h-3zM587 133h3v1h-3zM593 133h3v1h-3zM599 133h3v1h-3zM605 133h3v1h-3zM611 133h3v1h-3zM617 133h3v1h-3zM623 133h3v1h-3zM629 133h3v1h-3zM635 133h3v1h-3zM641 133h3v1h-3zM647 133h3v1h-3zM653 133h3v1h-3zM659 133h3v1h-3zM665 133h3v1h-3zM671 133h3v1h-3zM677 133h3v1h-3zM683 133h2v1h-2zM689 133h3v1h-3zM695 133h3v1h-3zM701 133h3v1h-3zM707 133h3v1h-3zM713 133h3v1h-3zM719 133h3v1h-3zM725 133h3v1h-3zM731 133h3v1h-3zM737 133h3v1h-3zM743 133h4v1h-4zM749 133h3v1h-3zM755 133h3v1h-3zM761 133h3v1h-3zM767 133h3v1h-3zM773 133h3v1h-3zM780 133h2v1h-2zM785 133h3v1h-3zM791 133h3v1h-3zM797 133h3v1h-3zM803 133h3v1h-3zM809 133h3v1h-3zM815 133h3v1h-3zM821 133h3v1h-3zM827 133h3v1h-3zM833 133h3v1h-3zM839 133h3v1h-3zM845 133h3v1h-3zM851 133h3v1h-3zM857 133h3v1h-3zM863 133h3v1h-3zM869 133h3v1h-3zM875 133h3v1h-3zM881 133h3v1h-3zM887 133h3v1h-3zM893 133h3v1h-3zM899 133h3v1h-3zM905 133h3v1h-3zM911 133h3v1h-3zM917 133h3v1h-3zM923 133h3v1h-3zM929 133h3v1h-3zM935 133h3v1h-3zM941 133h3v1h-3zM947 133h3v1h-3zM953 133h3v1h-3zM959 133h3v1h-3zM965 133h2v1h-2zM971 133h3v1h-3zM977 133h3v1h-3zM983 133h3v1h-3zM989 133h3v1h-3zM995 133h3v1h-3zM1001 133h3v1h-3zM1007 133h3v1h-3zM1019 133h3v1h-3zM1025 133h3v1h-3zM1031 133h3v1h-3zM1037 133h3v1h-3zM1043 133h3v1h-3zM1049 133h3v1h-3zM1055 133h3v1h-3zM1062 133h2v1h-2zM1067 133h3v1h-3zM1073 133h3v1h-3zM1079 133h3v1h-3zM1085 133h3v1h-3zM1091 133h3v1h-3zM1097 133h3v1h-3zM1103 133h3v1h-3zM1109 133h3v1h-3zM1115 133h3v1h-3zM1121 133h3v1h-3zM1127 133h3v1h-3zM1133 133h3v1h-3zM1139 133h3v1h-3zM1145 133h3v1h-3zM1151 133h3v1h-3zM1157 133h3v1h-3zM539 177h3v1h-3zM545 177h3v1h-3zM551 177h3v1h-3zM557 177h3v1h-3zM563 177h3v1h-3zM569 177h3v1h-3zM575 177h3v1h-3zM587 177h3v1h-3zM593 177h3v1h-3zM599 177h3v1h-3zM605 177h3v1h-3zM611 177h3v1h-3zM617 177h3v1h-3zM623 177h3v1h-3zM630 177h2v1h-2zM635 177h3v1h-3zM641 177h3v1h-3zM648 177h2v1h-2zM653 177h3v1h-3zM659 177h3v1h-3zM665 177h3v1h-3zM671 177h3v1h-3zM677 177h3v1h-3zM683 177h3v1h-3zM689 177h3v1h-3zM695 177h3v1h-3zM701 177h3v1h-3zM707 177h3v1h-3zM713 177h3v1h-3zM719 177h3v1h-3zM725 177h3v1h-3zM731 177h3v1h-3zM737 177h3v1h-3zM743 177h4v1h-4zM749 177h3v1h-3zM755 177h3v1h-3zM761 177h3v1h-3zM767 177h3v1h-3zM773 177h3v1h-3zM779 177h3v1h-3zM785 177h3v1h-3zM791 177h3v1h-3zM797 177h3v1h-3zM803 177h3v1h-3zM809 177h3v1h-3zM815 177h2v1h-2zM821 177h3v1h-3zM827 177h3v1h-3zM833 177h2v1h-2zM839 177h3v1h-3zM845 177h3v1h-3zM851 177h3v1h-3zM857 177h3v1h-3zM863 177h3v1h-3zM869 177h3v1h-3zM875 177h3v1h-3zM887 177h3v1h-3zM893 177h3v1h-3zM899 177h3v1h-3zM905 177h3v1h-3zM911 177h3v1h-3zM917 177h3v1h-3zM923 177h3v1h-3zM929 177h3v1h-3zM935 177h3v1h-3zM941 177h3v1h-3zM947 177h3v1h-3zM953 177h3v1h-3zM959 177h3v1h-3zM965 177h3v1h-3zM971 177h3v1h-3zM977 177h3v1h-3zM983 177h3v1h-3zM989 177h3v1h-3zM995 177h3v1h-3zM1001 177h3v1h-3zM1007 177h3v1h-3zM1013 177h3v1h-3zM1019 177h3v1h-3zM1025 177h3v1h-3zM1031 177h3v1h-3zM1037 177h3v1h-3zM1043 177h3v1h-3zM1049 177h3v1h-3zM1055 177h3v1h-3zM1061 177h3v1h-3zM1067 177h3v1h-3zM1073 177h3v1h-3zM1079 177h3v1h-3zM1085 177h3v1h-3zM1091 177h3v1h-3zM1097 177h3v1h-3zM1103 177h3v1h-3zM1109 177h3v1h-3zM1115 177h3v1h-3zM1121 177h3v1h-3zM1127 177h3v1h-3zM1133 177h3v1h-3zM1139 177h3v1h-3zM1151 177h3v1h-3zM1157 177h3v1h-3zM539 221h3v1h-3zM545 221h3v1h-3zM551 221h3v1h-3zM557 221h3v1h-3zM563 221h3v1h-3zM569 221h3v1h-3zM576 221h2v1h-2zM581 221h3v1h-3zM587 221h3v1h-3zM593 221h3v1h-3zM599 221h3v1h-3zM605 221h3v1h-3zM611 221h3v1h-3zM617 221h3v1h-3zM623 221h3v1h-3zM629 221h3v1h-3zM635 221h3v1h-3zM641 221h3v1h-3zM647 221h3v1h-3zM659 221h3v1h-3zM665 221h3v1h-3zM671 221h3v1h-3zM677 221h3v1h-3zM683 221h3v1h-3zM689 221h3v1h-3zM695 221h3v1h-3zM702 221h2v1h-2zM707 221h3v1h-3zM713 221h3v1h-3zM719 221h3v1h-3zM725 221h3v1h-3zM731 221h3v1h-3zM737 221h3v1h-3zM743 221h3v1h-3zM749 221h3v1h-3zM755 221h3v1h-3zM761 221h2v1h-2zM767 221h3v1h-3zM773 221h3v1h-3zM779 221h3v1h-3zM785 221h3v1h-3zM791 221h3v1h-3zM797 221h3v1h-3zM803 221h3v1h-3zM815 221h3v1h-3zM821 221h3v1h-3zM827 221h3v1h-3zM833 221h3v1h-3zM839 221h3v1h-3zM845 221h3v1h-3zM851 221h3v1h-3zM857 221h3v1h-3zM863 221h3v1h-3zM869 221h3v1h-3zM875 221h3v1h-3zM881 221h3v1h-3zM887 221h2v1h-2zM893 221h3v1h-3zM899 221h3v1h-3zM905 221h3v1h-3zM911 221h3v1h-3zM917 221h3v1h-3zM923 221h3v1h-3zM929 221h3v1h-3zM935 221h3v1h-3zM941 221h3v1h-3zM947 221h3v1h-3zM953 221h3v1h-3zM959 221h3v1h-3zM965 221h3v1h-3zM971 221h3v1h-3zM977 221h3v1h-3zM983 221h3v1h-3zM989 221h3v1h-3zM995 221h3v1h-3zM1001 221h3v1h-3zM1007 221h3v1h-3zM1013 221h3v1h-3zM1019 221h3v1h-3zM1025 221h3v1h-3zM1031 221h3v1h-3zM1037 221h3v1h-3zM1043 221h3v1h-3zM1049 221h3v1h-3zM1055 221h3v1h-3zM1061 221h3v1h-3zM1067 221h3v1h-3zM1073 221h3v1h-3zM1079 221h3v1h-3zM1085 221h3v1h-3zM1091 221h3v1h-3zM1097 221h3v1h-3zM1103 221h3v1h-3zM1109 221h3v1h-3zM1115 221h3v1h-3zM1121 221h3v1h-3zM1127 221h3v1h-3zM1133 221h3v1h-3zM1140 221h2v1h-2zM1145 221h3v1h-3zM1151 221h3v1h-3zM1157 221h3v1h-3zM539 265h3v1h-3zM545 265h3v1h-3zM551 265h3v1h-3zM557 265h3v1h-3zM563 265h3v1h-3zM569 265h3v1h-3zM575 265h3v1h-3zM581 265h3v1h-3zM587 265h3v1h-3zM593 265h3v1h-3zM599 265h3v1h-3zM605 265h3v1h-3zM611 265h3v1h-3zM617 265h3v1h-3zM623 265h3v1h-3zM629 265h3v1h-3zM635 265h3v1h-3zM641 265h3v1h-3zM647 265h3v1h-3zM653 265h3v1h-3zM659 265h2v1h-2zM665 265h3v1h-3zM671 265h3v1h-3zM677 265h3v1h-3zM683 265h3v1h-3zM689 265h3v1h-3zM695 265h3v1h-3zM701 265h3v1h-3zM707 265h2v1h-2zM713 265h3v1h-3zM719 265h3v1h-3zM725 265h3v1h-3zM731 265h3v1h-3zM737 265h3v1h-3zM743 265h4v1h-4zM749 265h3v1h-3zM756 265h2v1h-2zM761 265h3v1h-3zM767 265h3v1h-3zM773 265h3v1h-3zM779 265h3v1h-3zM785 265h3v1h-3zM791 265h3v1h-3zM797 265h3v1h-3zM803 265h3v1h-3zM809 265h3v1h-3zM815 265h3v1h-3zM821 265h3v1h-3zM827 265h3v1h-3zM833 265h3v1h-3zM839 265h3v1h-3zM845 265h3v1h-3zM851 265h3v1h-3zM857 265h3v1h-3zM863 265h3v1h-3zM869 265h3v1h-3zM875 265h3v1h-3zM881 265h3v1h-3zM887 265h3v1h-3zM893 265h3v1h-3zM899 265h3v1h-3zM905 265h3v1h-3zM911 265h3v1h-3zM917 265h3v1h-3zM923 265h3v1h-3zM929 265h3v1h-3zM935 265h3v1h-3zM941 265h2v1h-2zM947 265h3v1h-3zM953 265h3v1h-3zM959 265h3v1h-3zM965 265h3v1h-3zM971 265h3v1h-3zM977 265h3v1h-3zM983 265h3v1h-3zM995 265h3v1h-3zM1001 265h3v1h-3zM1007 265h3v1h-3zM1013 265h3v1h-3zM1019 265h3v1h-3zM1025 265h3v1h-3zM1031 265h3v1h-3zM1038 265h2v1h-2zM1043 265h3v1h-3zM1049 265h3v1h-3zM1055 265h3v1h-3zM1061 265h3v1h-3zM1067 265h3v1h-3zM1073 265h3v1h-3zM1079 265h3v1h-3zM1086 265h2v1h-2zM1091 265h3v1h-3zM1097 265h3v1h-3zM1103 265h3v1h-3zM1109 265h3v1h-3zM1115 265h3v1h-3zM1121 265h3v1h-3zM1127 265h3v1h-3zM1133 265h3v1h-3zM1139 265h3v1h-3zM1145 265h3v1h-3zM1151 265h3v1h-3zM1157 265h3v1h-3zM539 308h3v1h-3zM545 308h3v1h-3zM551 308h3v1h-3zM557 308h3v1h-3zM563 308h3v1h-3zM569 308h3v1h-3zM575 308h3v1h-3zM581 308h3v1h-3zM587 308h3v1h-3zM593 308h3v1h-3zM599 308h3v1h-3zM605 308h2v1h-2zM611 308h3v1h-3zM617 308h3v1h-3zM623 308h3v1h-3zM629 308h3v1h-3zM635 308h3v1h-3zM641 308h3v1h-3zM647 308h3v1h-3zM653 308h3v1h-3zM659 308h3v1h-3zM665 308h3v1h-3zM671 308h3v1h-3zM677 308h3v1h-3zM683 308h3v1h-3zM689 308h3v1h-3zM695 308h3v1h-3zM701 308h3v1h-3zM707 308h3v1h-3zM713 308h3v1h-3zM719 308h3v1h-3zM725 308h3v1h-3zM731 308h3v1h-3zM737 308h3v1h-3zM743 308h4v1h-4zM749 308h3v1h-3zM755 308h3v1h-3zM761 308h3v1h-3zM767 308h3v1h-3zM773 308h3v1h-3zM779 308h3v1h-3zM785 308h3v1h-3zM791 308h3v1h-3zM797 308h3v1h-3zM803 308h3v1h-3zM809 308h3v1h-3zM815 308h3v1h-3zM821 308h3v1h-3zM827 308h3v1h-3zM833 308h3v1h-3zM839 308h3v1h-3zM845 308h3v1h-3zM851 308h3v1h-3zM857 308h3v1h-3zM863 308h3v1h-3zM869 308h3v1h-3zM875 308h3v1h-3zM881 308h3v1h-3zM887 308h3v1h-3zM893 308h3v1h-3zM899 308h3v1h-3zM905 308h3v1h-3zM911 308h3v1h-3zM917 308h3v1h-3zM923 308h3v1h-3zM929 308h3v1h-3zM941 308h3v1h-3zM947 308h3v1h-3zM953 308h3v1h-3zM959 308h3v1h-3zM965 308h3v1h-3zM971 308h3v1h-3zM977 308h3v1h-3zM984 308h2v1h-2zM989 308h3v1h-3zM995 308h3v1h-3zM1001 308h3v1h-3zM1007 308h3v1h-3zM1013 308h3v1h-3zM1019 308h3v1h-3zM1025 308h3v1h-3zM1031 308h3v1h-3zM1037 308h3v1h-3zM1049 308h3v1h-3zM1055 308h3v1h-3zM1061 308h3v1h-3zM1067 308h3v1h-3zM1073 308h3v1h-3zM1079 308h3v1h-3zM1085 308h3v1h-3zM1097 308h3v1h-3zM1103 308h3v1h-3zM1109 308h3v1h-3zM1115 308h3v1h-3zM1121 308h3v1h-3zM1127 308h3v1h-3zM1133 308h3v1h-3zM1139 308h3v1h-3zM1145 308h3v1h-3zM1151 308h3v1h-3zM1157 308h3v1h-3zM539 352h3v1h-3zM545 352h3v1h-3zM551 352h2v1h-2zM557 352h3v1h-3zM563 352h3v1h-3zM569 352h3v1h-3zM575 352h3v1h-3zM581 352h3v1h-3zM587 352h3v1h-3zM593 352h3v1h-3zM605 352h3v1h-3zM611 352h3v1h-3zM617 352h3v1h-3zM623 352h3v1h-3zM629 352h3v1h-3zM635 352h3v1h-3zM641 352h3v1h-3zM647 352h3v1h-3zM653 352h3v1h-3zM659 352h3v1h-3zM665 352h3v1h-3zM671 352h3v1h-3zM677 352h3v1h-3zM683 352h3v1h-3zM689 352h3v1h-3zM695 352h3v1h-3zM701 352h3v1h-3zM707 352h3v1h-3zM713 352h3v1h-3zM719 352h3v1h-3zM725 352h3v1h-3zM731 352h3v1h-3zM737 352h3v1h-3zM743 352h3v1h-3zM749 352h3v1h-3zM755 352h3v1h-3zM761 352h3v1h-3zM767 352h3v1h-3zM773 352h3v1h-3zM779 352h3v1h-3zM785 352h3v1h-3zM791 352h3v1h-3zM797 352h3v1h-3zM803 352h3v1h-3zM809 352h3v1h-3zM815 352h3v1h-3zM821 352h3v1h-3zM827 352h3v1h-3zM833 352h3v1h-3zM839 352h3v1h-3zM845 352h3v1h-3zM851 352h3v1h-3zM857 352h3v1h-3zM869 352h3v1h-3zM875 352h3v1h-3zM881 352h3v1h-3zM887 352h3v1h-3zM893 352h3v1h-3zM899 352h3v1h-3zM905 352h3v1h-3zM912 352h2v1h-2zM917 352h3v1h-3zM923 352h3v1h-3zM930 352h2v1h-2zM935 352h3v1h-3zM941 352h3v1h-3zM947 352h3v1h-3zM953 352h3v1h-3zM959 352h3v1h-3zM965 352h3v1h-3zM971 352h3v1h-3zM977 352h3v1h-3zM983 352h3v1h-3zM989 352h3v1h-3zM995 352h3v1h-3zM1001 352h3v1h-3zM1007 352h3v1h-3zM1013 352h3v1h-3zM1019 352h3v1h-3zM1025 352h3v1h-3zM1031 352h3v1h-3zM1037 352h3v1h-3zM1043 352h3v1h-3zM1049 352h3v1h-3zM1055 352h3v1h-3zM1061 352h3v1h-3zM1067 352h3v1h-3zM1073 352h3v1h-3zM1079 352h3v1h-3zM1085 352h3v1h-3zM1091 352h3v1h-3zM1097 352h2v1h-2zM1103 352h3v1h-3zM1109 352h3v1h-3zM1115 352h2v1h-2zM1121 352h3v1h-3zM1127 352h3v1h-3zM1133 352h3v1h-3zM1139 352h3v1h-3zM1145 352h3v1h-3zM1151 352h3v1h-3zM1157 352h3v1h-3zM539 396h3v1h-3zM545 396h3v1h-3zM551 396h3v1h-3zM557 396h3v1h-3zM563 396h3v1h-3zM569 396h3v1h-3zM575 396h3v1h-3zM581 396h3v1h-3zM587 396h3v1h-3zM593 396h3v1h-3zM599 396h3v1h-3zM605 396h3v1h-3zM611 396h3v1h-3zM617 396h3v1h-3zM623 396h3v1h-3zM629 396h3v1h-3zM635 396h3v1h-3zM641 396h3v1h-3zM647 396h3v1h-3zM653 396h3v1h-3zM659 396h3v1h-3zM665 396h3v1h-3zM671 396h3v1h-3zM677 396h3v1h-3zM683 396h2v1h-2zM689 396h3v1h-3zM695 396h3v1h-3zM701 396h3v1h-3zM707 396h3v1h-3zM713 396h3v1h-3zM719 396h3v1h-3zM725 396h3v1h-3zM737 396h3v1h-3zM743 396h3v1h-3zM749 396h3v1h-3zM755 396h3v1h-3zM761 396h3v1h-3zM767 396h3v1h-3zM773 396h3v1h-3zM780 396h2v1h-2zM785 396h3v1h-3zM791 396h3v1h-3zM797 396h3v1h-3zM803 396h3v1h-3zM809 396h3v1h-3zM815 396h3v1h-3zM821 396h3v1h-3zM827 396h3v1h-3zM833 396h3v1h-3zM839 396h3v1h-3zM845 396h3v1h-3zM851 396h3v1h-3zM857 396h3v1h-3zM863 396h3v1h-3zM869 396h3v1h-3zM875 396h3v1h-3zM881 396h3v1h-3zM887 396h3v1h-3zM893 396h3v1h-3zM899 396h3v1h-3zM905 396h3v1h-3zM911 396h3v1h-3zM917 396h3v1h-3zM923 396h3v1h-3zM929 396h3v1h-3zM935 396h3v1h-3zM941 396h3v1h-3zM947 396h3v1h-3zM953 396h3v1h-3zM959 396h3v1h-3zM965 396h2v1h-2zM971 396h3v1h-3zM977 396h3v1h-3zM983 396h3v1h-3zM989 396h3v1h-3zM995 396h3v1h-3zM1001 396h3v1h-3zM1007 396h3v1h-3zM1013 396h3v1h-3zM1019 396h3v1h-3zM1025 396h3v1h-3zM1031 396h3v1h-3zM1037 396h3v1h-3zM1043 396h3v1h-3zM1049 396h3v1h-3zM1055 396h3v1h-3zM1062 396h2v1h-2zM1067 396h3v1h-3zM1073 396h3v1h-3zM1079 396h3v1h-3zM1085 396h3v1h-3zM1091 396h3v1h-3zM1097 396h3v1h-3zM1103 396h3v1h-3zM1109 396h3v1h-3zM1115 396h3v1h-3zM1121 396h3v1h-3zM1127 396h3v1h-3zM1133 396h3v1h-3zM1139 396h3v1h-3zM1145 396h3v1h-3zM1151 396h3v1h-3zM1157 396h3v1h-3zM539 439h3v1h-3zM545 439h3v1h-3zM551 439h3v1h-3zM558 439h2v1h-2zM563 439h3v1h-3zM569 439h3v1h-3zM575 439h2v1h-2zM581 439h3v1h-3zM587 439h3v1h-3zM593 439h3v1h-3zM599 439h3v1h-3zM605 439h3v1h-3zM611 439h3v1h-3zM617 439h3v1h-3zM623 439h3v1h-3zM629 439h3v1h-3zM635 439h3v1h-3zM641 439h3v1h-3zM647 439h3v1h-3zM653 439h3v1h-3zM659 439h3v1h-3zM665 439h3v1h-3zM671 439h3v1h-3zM677 439h3v1h-3zM683 439h3v1h-3zM689 439h3v1h-3zM695 439h3v1h-3zM701 439h3v1h-3zM707 439h3v1h-3zM713 439h3v1h-3zM719 439h3v1h-3zM725 439h3v1h-3zM731 439h3v1h-3zM737 439h3v1h-3zM743 439h2v1h-2zM749 439h3v1h-3zM755 439h3v1h-3zM761 439h3v1h-3zM767 439h3v1h-3zM773 439h3v1h-3zM779 439h3v1h-3zM785 439h3v1h-3zM791 439h3v1h-3zM797 439h3v1h-3zM803 439h3v1h-3zM809 439h3v1h-3zM815 439h3v1h-3zM821 439h3v1h-3zM827 439h3v1h-3zM833 439h3v1h-3zM839 439h3v1h-3zM845 439h3v1h-3zM851 439h3v1h-3zM857 439h3v1h-3zM863 439h3v1h-3zM869 439h3v1h-3zM875 439h3v1h-3zM881 439h3v1h-3zM887 439h3v1h-3zM893 439h3v1h-3zM899 439h3v1h-3zM911 439h3v1h-3zM917 439h3v1h-3zM923 439h3v1h-3zM929 439h3v1h-3zM935 439h3v1h-3zM941 439h3v1h-3zM947 439h3v1h-3zM954 439h2v1h-2zM959 439h3v1h-3zM965 439h3v1h-3zM971 439h3v1h-3zM977 439h3v1h-3zM983 439h3v1h-3zM989 439h3v1h-3zM995 439h3v1h-3zM1001 439h3v1h-3zM1007 439h3v1h-3zM1013 439h3v1h-3zM1019 439h3v1h-3zM1025 439h3v1h-3zM1031 439h3v1h-3zM1037 439h3v1h-3zM1043 439h3v1h-3zM1049 439h3v1h-3zM1055 439h3v1h-3zM1061 439h3v1h-3zM1067 439h3v1h-3zM1079 439h3v1h-3zM1085 439h3v1h-3zM1091 439h3v1h-3zM1097 439h3v1h-3zM1103 439h3v1h-3zM1109 439h3v1h-3zM1115 439h3v1h-3zM1122 439h2v1h-2zM1127 439h3v1h-3zM1133 439h3v1h-3zM1139 439h2v1h-2zM1145 439h3v1h-3zM1151 439h3v1h-3zM1157 439h3v1h-3zM581 177h1v1h-1zM583 177h1v1h-1zM599 352h1v1h-1zM601 352h1v1h-1zM623 90h1v1h-1zM625 90h1v1h-1zM642 49h1v3h-1zM642 55h1v3h-1zM642 61h1v3h-1zM642 67h1v3h-1zM642 73h1v3h-1zM642 79h1v3h-1zM642 85h1v3h-1zM642 91h1v3h-1zM642 97h1v3h-1zM642 103h1v3h-1zM642 109h1v3h-1zM642 115h1v1h-1zM642 121h1v3h-1zM642 127h1v3h-1zM642 134h1v2h-1zM642 139h1v3h-1zM642 145h1v3h-1zM642 157h1v3h-1zM642 163h1v3h-1zM642 169h1v3h-1zM642 175h1v2h-1zM642 181h1v3h-1zM642 187h1v3h-1zM642 193h1v3h-1zM642 199h1v3h-1zM642 205h1v3h-1zM642 211h1v3h-1zM642 217h1v3h-1zM642 223h1v3h-1zM642 229h1v3h-1zM642 235h1v3h-1zM642 241h1v3h-1zM642 247h1v3h-1zM642 253h1v3h-1zM642 259h1v3h-1zM642 266h1v2h-1zM642 271h1v3h-1zM642 277h1v3h-1zM642 283h1v3h-1zM642 289h1v3h-1zM642 295h1v3h-1zM642 301h1v3h-1zM642 307h1v1h-1zM642 309h1v1h-1zM642 313h1v3h-1zM642 319h1v3h-1zM642 325h1v3h-1zM642 331h1v3h-1zM642 337h1v3h-1zM642 343h1v3h-1zM642 349h1v3h-1zM642 355h1v3h-1zM642 361h1v3h-1zM642 367h1v3h-1zM642 373h1v3h-1zM642 379h1v3h-1zM642 385h1v3h-1zM642 391h1v3h-1zM642 397h1v3h-1zM642 403h1v3h-1zM642 409h1v3h-1zM642 415h1v3h-1zM642 421h1v3h-1zM642 427h1v3h-1zM642 433h1v3h-1zM642 440h1v2h-1zM642 445h1v3h-1zM642 451h1v3h-1zM642 457h1v3h-1zM642 463h1v3h-1zM642 469h1v3h-1zM642 475h1v3h-1zM642 481h1v2h-1zM653 221h1v1h-1zM655 221h1v1h-1zM731 396h1v1h-1zM733 396h1v1h-1zM746 49h1v3h-1zM746 55h1v3h-1zM746 61h1v3h-1zM746 67h1v3h-1zM746 73h1v3h-1zM746 79h1v3h-1zM746 85h1v3h-1zM746 91h1v3h-1zM746 97h1v3h-1zM746 103h1v3h-1zM746 109h1v3h-1zM746 115h1v3h-1zM746 121h1v3h-1zM746 127h1v3h-1zM746 134h1v2h-1zM746 139h1v3h-1zM746 145h1v3h-1zM746 151h1v3h-1zM746 157h1v3h-1zM746 163h1v3h-1zM746 169h1v3h-1zM746 175h1v2h-1zM746 181h1v3h-1zM746 187h1v3h-1zM746 193h1v3h-1zM746 199h1v3h-1zM746 205h1v3h-1zM746 211h1v3h-1zM746 217h1v3h-1zM746 223h1v3h-1zM746 229h1v3h-1zM746 235h1v3h-1zM746 241h1v3h-1zM746 247h1v3h-1zM746 253h1v3h-1zM746 259h1v3h-1zM746 266h1v2h-1zM746 271h1v3h-1zM746 277h1v3h-1zM746 283h1v3h-1zM746 289h1v3h-1zM746 295h1v3h-1zM746 301h1v3h-1zM746 307h1v1h-1zM746 309h1v1h-1zM746 313h1v3h-1zM746 325h1v3h-1zM746 331h1v3h-1zM746 337h1v3h-1zM746 343h1v3h-1zM746 349h1v3h-1zM746 355h1v3h-1zM746 361h1v3h-1zM746 367h1v3h-1zM746 373h1v3h-1zM746 379h1v3h-1zM746 385h1v3h-1zM746 391h1v3h-1zM746 397h1v3h-1zM746 403h1v3h-1zM746 409h1v3h-1zM746 415h1v3h-1zM746 421h1v3h-1zM746 427h1v3h-1zM746 433h1v3h-1zM746 439h1v1h-1zM746 445h1v3h-1zM746 451h1v3h-1zM746 457h1v3h-1zM746 463h1v3h-1zM746 469h1v3h-1zM746 475h1v3h-1zM746 481h1v2h-1zM791 90h1v1h-1zM793 90h1v1h-1zM809 221h1v1h-1zM811 221h1v1h-1zM849 49h1v3h-1zM849 55h1v3h-1zM849 61h1v3h-1zM849 67h1v3h-1zM849 73h1v3h-1zM849 79h1v1h-1zM849 81h1v1h-1zM849 85h1v3h-1zM849 91h1v3h-1zM849 97h1v3h-1zM849 103h1v3h-1zM849 109h1v3h-1zM849 115h1v3h-1zM849 121h1v3h-1zM849 127h1v3h-1zM849 133h1v3h-1zM849 139h1v3h-1zM849 145h1v3h-1zM849 151h1v3h-1zM849 157h1v3h-1zM849 163h1v3h-1zM849 169h1v3h-1zM849 175h1v3h-1zM849 181h1v3h-1zM849 187h1v3h-1zM849 193h1v3h-1zM849 199h1v3h-1zM849 205h1v3h-1zM849 211h1v3h-1zM849 217h1v3h-1zM849 223h1v3h-1zM849 229h1v3h-1zM849 235h1v3h-1zM849 241h1v3h-1zM849 247h1v3h-1zM849 253h1v3h-1zM849 266h1v2h-1zM849 271h1v3h-1zM849 277h1v3h-1zM849 283h1v3h-1zM849 289h1v3h-1zM849 295h1v3h-1zM849 301h1v3h-1zM849 307h1v3h-1zM849 313h1v3h-1zM849 319h1v3h-1zM849 325h1v3h-1zM849 331h1v3h-1zM849 337h1v3h-1zM849 343h1v3h-1zM849 349h1v3h-1zM849 355h1v3h-1zM849 361h1v3h-1zM849 367h1v3h-1zM849 373h1v3h-1zM849 379h1v3h-1zM849 385h1v3h-1zM849 391h1v3h-1zM849 397h1v3h-1zM849 403h1v3h-1zM849 409h1v3h-1zM849 415h1v3h-1zM849 421h1v3h-1zM849 427h1v3h-1zM849 433h1v3h-1zM849 439h1v3h-1zM849 445h1v3h-1zM849 451h1v3h-1zM849 457h1v3h-1zM849 463h1v3h-1zM849 469h1v3h-1zM849 475h1v3h-1zM849 481h1v2h-1zM863 352h1v1h-1zM865 352h1v1h-1zM881 177h1v1h-1zM883 177h1v1h-1zM905 439h1v1h-1zM907 439h1v1h-1zM935 308h1v1h-1zM937 308h1v1h-1zM953 49h1v3h-1zM953 55h1v3h-1zM953 61h1v3h-1zM953 67h1v3h-1zM953 73h1v3h-1zM953 79h1v3h-1zM953 85h1v3h-1zM953 91h1v3h-1zM953 97h1v3h-1zM953 103h1v3h-1zM953 109h1v3h-1zM953 115h1v3h-1zM953 121h1v3h-1zM953 127h1v3h-1zM953 134h1v2h-1zM953 139h1v3h-1zM953 145h1v3h-1zM953 151h1v3h-1zM953 157h1v3h-1zM953 163h1v3h-1zM953 169h1v3h-1zM953 175h1v2h-1zM953 181h1v3h-1zM953 187h1v3h-1zM953 193h1v3h-1zM953 199h1v3h-1zM953 211h1v3h-1zM953 217h1v3h-1zM953 223h1v3h-1zM953 229h1v3h-1zM953 235h1v3h-1zM953 241h1v3h-1zM953 247h1v3h-1zM953 253h1v3h-1zM953 259h1v3h-1zM953 266h1v2h-1zM953 271h1v3h-1zM953 277h1v3h-1zM953 283h1v3h-1zM953 289h1v3h-1zM953 295h1v3h-1zM953 301h1v3h-1zM953 307h1v1h-1zM953 309h1v1h-1zM953 313h1v3h-1zM953 319h1v3h-1zM953 325h1v3h-1zM953 331h1v3h-1zM953 337h1v3h-1zM953 343h1v3h-1zM953 349h1v3h-1zM953 355h1v3h-1zM953 361h1v3h-1zM953 367h1v3h-1zM953 373h1v3h-1zM953 379h1v3h-1zM953 385h1v3h-1zM953 391h1v3h-1zM953 397h1v3h-1zM953 403h1v3h-1zM953 409h1v3h-1zM953 415h1v3h-1zM953 421h1v3h-1zM953 427h1v3h-1zM953 433h1v3h-1zM953 441h1v1h-1zM953 445h1v3h-1zM953 451h1v3h-1zM953 457h1v3h-1zM953 463h1v3h-1zM953 469h1v3h-1zM953 475h1v3h-1zM953 481h1v2h-1zM989 265h1v1h-1zM991 265h1v1h-1zM1013 133h1v1h-1zM1015 133h1v1h-1zM1043 308h1v1h-1zM1045 308h1v1h-1zM1056 49h1v3h-1zM1056 55h1v3h-1zM1056 61h1v3h-1zM1056 67h1v3h-1zM1056 73h1v3h-1zM1056 79h1v3h-1zM1056 85h1v3h-1zM1056 91h1v3h-1zM1056 97h1v3h-1zM1056 103h1v3h-1zM1056 109h1v3h-1zM1056 116h1v2h-1zM1056 121h1v3h-1zM1056 127h1v3h-1zM1056 134h1v2h-1zM1056 139h1v3h-1zM1056 145h1v3h-1zM1056 151h1v3h-1zM1056 157h1v3h-1zM1056 163h1v3h-1zM1056 169h1v3h-1zM1056 175h1v2h-1zM1056 181h1v3h-1zM1056 187h1v3h-1zM1056 193h1v3h-1zM1056 199h1v3h-1zM1056 205h1v3h-1zM1056 211h1v3h-1zM1056 217h1v3h-1zM1056 223h1v3h-1zM1056 229h1v3h-1zM1056 235h1v3h-1zM1056 241h1v3h-1zM1056 247h1v3h-1zM1056 253h1v3h-1zM1056 259h1v3h-1zM1056 266h1v2h-1zM1056 271h1v3h-1zM1056 277h1v3h-1zM1056 283h1v3h-1zM1056 289h1v3h-1zM1056 295h1v3h-1zM1056 301h1v3h-1zM1056 307h1v1h-1zM1056 309h1v1h-1zM1056 313h1v3h-1zM1056 319h1v3h-1zM1056 325h1v3h-1zM1056 331h1v3h-1zM1056 337h1v3h-1zM1056 343h1v3h-1zM1056 349h1v3h-1zM1056 355h1v3h-1zM1056 361h1v3h-1zM1056 367h1v3h-1zM1056 375h1v1h-1zM1056 379h1v3h-1zM1056 385h1v3h-1zM1056 391h1v3h-1zM1056 397h1v3h-1zM1056 403h1v3h-1zM1056 409h1v3h-1zM1056 415h1v3h-1zM1056 421h1v3h-1zM1056 427h1v3h-1zM1056 433h1v3h-1zM1056 440h1v2h-1zM1056 445h1v3h-1zM1056 451h1v3h-1zM1056 457h1v3h-1zM1056 463h1v3h-1zM1056 469h1v3h-1zM1056 475h1v3h-1zM1056 481h1v2h-1zM1073 439h1v1h-1zM1075 439h1v1h-1zM1091 308h1v1h-1zM1093 308h1v1h-1zM1145 177h1v1h-1zM1147 177h1v1h-1z"/>
<path fill="#ff0000" d="M613 80h4v1h-4zM801 80h4v1h-4zM989 80h4v1h-4zM611 81h2v1h-2zM617 81h2v1h-2zM799 81h2v1h-2zM805 81h2v1h-2zM987 81h2v1h-2zM993 81h2v1h-2zM706 449h6v1h-6zM894 449h6v1h-6zM1082 449h6v1h-6zM539 414h1v2h-1zM540 410h1v4h-1zM541 406h1v4h-1zM542 402h1v4h-1zM543 398h1v4h-1zM545 389h1v4h-1zM546 384h1v5h-1zM547 380h1v4h-1zM548 375h1v5h-1zM549 370h1v5h-1zM550 365h1v5h-1zM551 359h1v6h-1zM552 354h1v5h-1zM553 348h1v6h-1zM554 343h1v5h-1zM555 337h1v6h-1zM556 331h1v6h-1zM557 325h1v6h-1zM558 319h1v6h-1zM559 314h1v5h-1zM560 308h1v6h-1zM561 302h1v6h-1zM562 295h1v7h-1zM563 289h1v6h-1zM564 283h1v6h-1zM565 277h1v6h-1zM566 271h1v6h-1zM567 265h1v6h-1zM568 259h1v6h-1zM569 252h1v7h-1zM570 246h1v6h-1zM571 240h1v6h-1zM572 234h1v6h-1zM573 228h1v6h-1zM574 222h1v6h-1zM575 216h1v6h-1zM576 210h1v6h-1zM577 204h1v6h-1zM578 198h1v6h-1zM579 193h1v5h-1zM580 187h1v6h-1zM581 182h1v5h-1zM582 176h1v6h-1zM583 171h1v5h-1zM584 168h1v3h-1zM585 161h1v5h-1zM586 156h1v5h-1zM587 151h1v5h-1zM588 146h1v5h-1zM589 141h1v5h-1zM590 136h1v5h-1zM591 132h1v4h-1zM592 128h1v4h-1zM593 124h1v4h-1zM594 120h1v4h-1zM595 116h1v4h-1zM596 113h1v3h-1zM597 109h1v4h-1zM598 106h1v3h-1zM599 103h1v3h-1zM600 100h1v3h-1zM601 97h1v3h-1zM602 95h1v2h-1zM603 92h1v3h-1zM604 90h1v2h-1zM605 88h1v2h-1zM606 87h1v1h-1zM607 85h1v2h-1zM608 84h1v1h-1zM609 83h1v1h-1zM610 82h1v1h-1zM619 82h1v1h-1zM620 83h1v1h-1zM621 84h1v2h-1zM622 86h1v1h-1zM623 87h1v2h-1zM624 89h1v2h-1zM625 91h1v2h-1zM626 93h1v2h-1zM627 95h1v3h-1zM628 98h1v2h-1zM629 100h1v3h-1zM630 103h1v3h-1zM631 106h1v4h-1zM632 110h1v3h-1zM633 113h1v4h-1zM634 117h1v4h-1zM635 121h1v4h-1zM636 125h1v4h-1zM637 129h1v4h-1zM639 137h1v4h-1zM640 141h1v5h-1zM641 146h1v5h-1zM642 151h1v5h-1zM643 156h1v5h-1zM644 161h1v5h-1zM645 168h1v3h-1zM646 171h1v6h-1zM647 177h1v5h-1zM648 182h1v6h-1zM649 188h1v5h-1zM650 193h1v6h-1zM651 199h1v6h-1zM652 205h1v6h-1zM653 211h1v6h-1zM654 217h1v6h-1zM655 223h1v6h-1zM656 229h1v6h-1zM657 235h1v6h-1zM658 241h1v6h-1zM659 247h1v6h-1zM660 253h1v6h-1zM661 259h1v7h-1zM662 266h1v6h-1zM663 272h1v6h-1zM664 278h1v6h-1zM665 284h1v6h-1zM666 290h1v6h-1zM667 296h1v6h-1zM668 302h1v7h-1zM669 309h1v5h-1zM670 314h1v6h-1zM671 320h1v6h-1zM672 326h1v6h-1zM673 332h1v6h-1zM674 338h1v5h-1zM675 343h1v6h-1zM676 349h1v5h-1zM677 354h1v6h-1zM678 360h1v5h-1zM679 365h1v5h-1zM680 370h1v5h-1zM681 375h1v5h-1zM682 380h1v5h-1zM683 385h1v4h-1zM684 389h1v5h-1zM685 394h1v4h-1zM686 398h1v5h-1zM687 403h1v4h-1zM688 407h1v4h-1zM689 411h1v3h-1zM690 414h1v4h-1zM691 418h1v3h-1zM692 421h1v3h-1zM693 424h1v3h-1zM694 427h1v3h-1zM695 430h1v3h-1zM696 433h1v3h-1zM697 436h1v2h-1zM698 438h1v2h-1zM699 440h1v2h-1zM700 442h1v2h-1zM701 444h1v1h-1zM702 445h1v1h-1zM703 446h1v1h-1zM704 447h1v1h-1zM705 448h1v1h-1zM712 448h1v1h-1zM713 447h1v1h-1zM714 446h1v1h-1zM715 445h1v1h-1zM716 443h1v2h-1zM717 441h1v2h-1zM718 439h1v2h-1zM719 437h1v2h-1zM720 435h1v2h-1zM721 433h1v2h-1zM722 430h1v3h-1zM723 427h1v3h-1zM724 424h1v3h-1zM725 421h1v3h-1zM726 417h1v4h-1zM727 414h1v3h-1zM728 410h1v4h-1zM729 406h1v4h-1zM730 402h1v4h-1zM731 398h1v4h-1zM733 389h1v4h-1zM734 384h1v5h-1zM735 380h1v4h-1zM736 375h1v5h-1zM737 370h1v5h-1zM738 365h1v5h-1zM739 359h1v6h-1zM740 354h1v5h-1zM741 348h1v6h-1zM742 343h1v5h-1zM743 337h1v6h-1zM744 331h1v6h-1zM745 325h1v6h-1zM746 319h1v6h-1zM747 314h1v5h-1zM748 308h1v6h-1zM749 302h1v6h-1zM750 295h1v7h-1zM751 289h1v6h-1zM752 283h1v6h-1zM753 277h1v6h-1zM754 271h1v6h-1zM755 265h1v6h-1zM756 259h1v6h-1zM757 252h1v7h-1zM758 246h1v6h-1zM759 240h1v6h-1zM760 234h1v6h-1zM761 228h1v6h-1zM762 222h1v6h-1zM763 216h1v6h-1zM764 210h1v6h-1zM765 204h1v6h-1zM766 198h1v6h-1zM767 193h1v5h-1zM768 187h1v6h-1zM769 182h1v5h-1zM770 176h1v6h-1zM771 171h1v5h-1zM772 168h1v3h-1zM773 161h1v5h-1zM774 156h1v5h-1zM775 151h1v5h-1zM776 146h1v5h-1zM777 141h1v5h-1zM778 136h1v5h-1zM779 132h1v4h-1zM780 128h1v4h-1zM781 124h1v4h-1zM782 120h1v4h-1zM783 116h1v4h-1zM784 113h1v3h-1zM785 109h1v4h-1zM786 106h1v3h-1zM787 103h1v3h-1zM788 100h1v3h-1zM789 97h1v3h-1zM790 95h1v2h-1zM791 92h1v3h-1zM792 90h1v2h-1zM793 88h1v2h-1zM794 87h1v1h-1zM795 85h1v2h-1zM796 84h1v1h-1zM797 83h1v1h-1zM798 82h1v1h-1zM807 82h1v1h-1zM808 83h1v1h-1zM809 84h1v2h-1zM810 86h1v1h-1zM811 87h1v2h-1zM812 89h1v2h-1zM813 91h1v2h-1zM814 93h1v2h-1zM815 95h1v3h-1zM816 98h1v2h-1zM817 100h1v3h-1zM818 103h1v3h-1zM819 106h1v4h-1zM820 110h1v3h-1zM821 113h1v4h-1zM822 117h1v4h-1zM823 121h1v4h-1zM824 125h1v4h-1zM825 129h1v4h-1zM827 137h1v4h-1zM828 141h1v5h-1zM829 146h1v5h-1zM830 151h1v5h-1zM831 156h1v5h-1zM832 161h1v5h-1zM833 168h1v3h-1zM834 171h1v6h-1zM835 177h1v5h-1zM836 182h1v6h-1zM837 188h1v5h-1zM838 193h1v6h-1zM839 199h1v6h-1zM840 205h1v6h-1zM841 211h1v6h-1zM842 217h1v6h-1zM843 223h1v6h-1zM844 229h1v6h-1zM845 235h1v6h-1zM846 241h1v6h-1zM847 247h1v6h-1zM848 253h1v6h-1zM849 259h1v7h-1zM850 266h1v6h-1zM851 272h1v6h-1zM852 278h1v6h-1zM853 284h1v6h-1zM854 290h1v6h-1zM855 296h1v6h-1zM856 302h1v7h-1zM857 309h1v5h-1zM858 314h1v6h-1zM859 320h1v6h-1zM860 326h1v6h-1zM861 332h1v6h-1zM862 338h1v5h-1zM863 343h1v6h-1zM864 349h1v5h-1zM865 354h1v6h-1zM866 360h1v5h-1zM867 365h1v5h-1zM868 370h1v5h-1zM869 375h1v5h-1zM870 380h1v5h-1zM871 385h1v4h-1zM872 389h1v5h-1zM873 394h1v4h-1zM874 398h1v5h-1zM875 403h1v4h-1zM876 407h1v4h-1zM877 411h1v3h-1zM878 414h1v4h-1zM879 418h1v3h-1zM880 421h1v3h-1zM881 424h1v3h-1zM882 427h1v3h-1zM883 430h1v3h-1zM884 433h1v3h-1zM885 436h1v2h-1zM886 438h1v2h-1zM887 440h1v2h-1zM888 442h1v2h-1zM889 444h1v1h-1zM890 445h1v1h-1zM891 446h1v1h-1zM892 447h1v1h-1zM893 448h1v1h-1zM900 448h1v1h-1zM901 447h1v1h-1zM902 446h1v1h-1zM903 445h1v1h-1zM904 443h1v2h-1zM905 441h1v2h-1zM906 439h1v2h-1zM907 437h1v2h-1zM908 435h1v2h-1zM909 433h1v2h-1zM910 430h1v3h-1zM911 427h1v3h-1zM912 424h1v3h-1zM913 421h1v3h-1zM914 417h1v4h-1zM915 414h1v3h-1zM916 410h1v4h-1zM917 406h1v4h-1zM918 402h1v4h-1zM919 398h1v4h-1zM921 389h1v4h-1zM922 384h1v5h-1zM923 380h1v4h-1zM924 375h1v5h-1zM925 370h1v5h-1zM926 365h1v5h-1zM927 359h1v6h-1zM928 354h1v5h-1zM929 348h1v6h-1zM930 343h1v5h-1zM931 337h1v6h-1zM932 331h1v6h-1zM933 325h1v6h-1zM934 319h1v6h-1zM935 314h1v5h-1zM936 308h1v6h-1zM937 302h1v6h-1zM938 295h1v7h-1zM939 289h1v6h-1zM940 283h1v6h-1zM941 277h1v6h-1zM942 271h1v6h-1zM943 265h1v6h-1zM944 259h1v6h-1zM945 252h1v7h-1zM946 246h1v6h-1zM947 240h1v6h-1zM948 234h1v6h-1zM949 228h1v6h-1zM950 222h1v6h-1zM951 216h1v6h-1zM952 210h1v6h-1zM953 204h1v6h-1zM954 198h1v6h-1zM955 193h1v5h-1zM956 187h1v6h-1zM957 182h1v5h-1zM958 176h1v6h-1zM959 171h1v5h-1zM960 168h1v3h-1zM961 161h1v5h-1zM962 156h1v5h-1zM963 151h1v5h-1zM964 146h1v5h-1zM965 141h1v5h-1zM966 136h1v5h-1zM967 132h1v4h-1zM968 128h1v4h-1zM969 124h1v4h-1zM970 120h1v4h-1zM971 116h1v4h-1zM972 113h1v3h-1zM973 109h1v4h-1zM974 106h1v3h-1zM975 103h1v3h-1zM976 100h1v3h-1zM977 97h1v3h-1zM978 95h1v2h-1zM979 92h1v3h-1zM980 90h1v2h-1zM981 88h1v2h-1zM982 87h1v1h-1zM983 85h1v2h-1zM984 84h1v1h-1zM985 83h1v1h-1zM986 82h1v1h-1zM995 82h1v1h-1zM996 83h1v1h-1zM997 84h1v2h-1zM998 86h1v1h-1zM999 87h1v2h-1zM1000 89h1v2h-1zM1001 91h1v2h-1zM1002 93h1v2h-1zM1003 95h1v3h-1zM1004 98h1v2h-1zM1005 100h1v3h-1zM1006 103h1v3h-1zM1007 106h1v4h-1zM1008 110h1v3h-1zM1009 113h1v4h-1zM1010 117h1v4h-1zM1011 121h1v4h-1zM1012 125h1v4h-1zM1013 129h1v4h-1zM1015 137h1v4h-1zM1016 141h1v5h-1zM1017 146h1v5h-1zM1018 151h1v5h-1zM1019 156h1v5h-1zM1020 161h1v5h-1zM1021 168h1v3h-1zM1022 171h1v6h-1zM1023 177h1v5h-1zM1024 182h1v6h-1zM1025 188h1v5h-1zM1026 193h1v6h-1zM1027 199h1v6h-1zM1028 205h1v6h-1zM1029 211h1v6h-1zM1030 217h1v6h-1zM1031 223h1v6h-1zM1032 229h1v6h-1zM1033 235h1v6h-1zM1034 241h1v6h-1zM1035 247h1v6h-1zM1036 253h1v6h-1zM1037 259h1v7h-1zM1038 266h1v6h-1zM1039 272h1v6h-1zM1040 278h1v6h-1zM1041 284h1v6h-1zM1042 290h1v6h-1zM1043 296h1v6h-1zM1044 302h1v7h-1zM1045 309h1v5h-1zM1046 314h1v6h-1zM1047 320h1v6h-1zM1048 326h1v6h-1zM1049 332h1v6h-1zM1050 338h1v5h-1zM1051 343h1v6h-1zM1052 349h1v5h-1zM1053 354h1v6h-1zM1054 360h1v5h-1zM1055 365h1v5h-1zM1056 370h1v5h-1zM1057 375h1v5h-1zM1058 380h1v5h-1zM1059 385h1v4h-1zM1060 389h1v5h-1zM1061 394h1v4h-1zM1062 398h1v5h-1zM1063 403h1v4h-1zM1064 407h1v4h-1zM1065 411h1v3h-1zM1066 414h1v4h-1zM1067 418h1v3h-1zM1068 421h1v3h-1zM1069 424h1v3h-1zM1070 427h1v3h-1zM1071 430h1v3h-1zM1072 433h1v3h-1zM1073 436h1v2h-1zM1074 438h1v2h-1zM1075 440h1v2h-1zM1076 442h1v2h-1zM1077 444h1v1h-1zM1078 445h1v1h-1zM1079 446h1v1h-1zM1080 447h1v1h-1zM1081 448h1v1h-1zM1088 448h1v1h-1zM1089 447h1v1h-1zM1090 446h1v1h-1zM1091 445h1v1h-1zM1092 443h1v2h-1zM1093 441h1v2h-1zM1094 439h1v2h-1zM1095 437h1v2h-1zM1096 435h1v2h-1zM1097 433h1v2h-1zM1098 430h1v3h-1zM1099 427h1v3h-1zM1100 424h1v3h-1zM1101 421h1v3h-1zM1102 417h1v4h-1zM1103 414h1v3h-1zM1104 410h1v4h-1zM1105 406h1v4h-1zM1106 402h1v4h-1zM1107 398h1v4h-1zM1109 389h1v4h-1zM1110 384h1v5h-1zM1111 380h1v4h-1zM1112 375h1v5h-1zM1113 370h1v5h-1zM1114 365h1v5h-1zM1115 359h1v6h-1zM1116 354h1v5h-1zM1117 348h1v6h-1zM1118 343h1v5h-1zM1119 337h1v6h-1zM1120 331h1v6h-1zM1121 325h1v6h-1zM1122 319h1v6h-1zM1123 314h1v5h-1zM1124 308h1v6h-1zM1125 302h1v6h-1zM1126 295h1v7h-1zM1127 289h1v6h-1zM1128 283h1v6h-1zM1129 277h1v6h-1zM1130 271h1v6h-1zM1131 265h1v6h-1zM1132 259h1v6h-1zM1133 252h1v7h-1zM1134 246h1v6h-1zM1135 240h1v6h-1zM1136 234h1v6h-1zM1137 228h1v6h-1zM1138 222h1v6h-1zM1139 216h1v6h-1zM1140 210h1v6h-1zM1141 204h1v6h-1zM1142 198h1v6h-1zM1143 193h1v5h-1zM1144 187h1v6h-1zM1145 182h1v5h-1zM1146 176h1v6h-1zM1147 171h1v5h-1zM1148 168h1v3h-1zM1149 161h1v5h-1zM1150 156h1v5h-1zM1151 151h1v5h-1zM1152 146h1v5h-1zM1153 141h1v5h-1zM1154 136h1v5h-1zM1155 132h1v4h-1zM1156 128h1v4h-1zM1157 124h1v4h-1zM1158 120h1v4h-1zM1159 116h1v4h-1zM1160 114h1v2h-1z"/>
<path fill="#00ff00" d="M660 80h5v1h-5zM848 80h5v1h-5zM1036 80h5v1h-5zM658 81h2v1h-2zM846 81h2v1h-2zM1034 81h2v1h-2zM571 448h2v1h-2zM759 448h2v1h-2zM947 448h2v1h-2zM1135 448h2v1h-2zM565 449h6v1h-6zM753 449h6v1h-6zM941 449h6v1h-6zM1129 449h6v1h-6zM539 371h1v3h-1zM540 374h1v5h-1zM541 379h1v5h-1zM542 384h1v5h-1zM543 389h1v4h-1zM544 393h1v5h-1zM545 398h1v4h-1zM546 402h1v4h-1zM547 406h1v4h-1zM548 410h1v4h-1zM549 414h1v3h-1zM550 417h1v4h-1zM551 421h1v3h-1zM552 424h1v3h-1zM553 427h1v3h-1zM554 430h1v3h-1zM555 433h1v2h-1zM556 435h1v3h-1zM557 438h1v2h-1zM558 440h1v2h-1zM559 442h1v2h-1zM560 444h1v1h-1zM561 445h1v1h-1zM562 446h1v1h-1zM563 447h1v1h-1zM564 448h1v1h-1zM572 447h1v1h-1zM573 446h1v1h-1zM574 445h1v1h-1zM575 443h1v2h-1zM576 441h1v2h-1zM577 439h1v2h-1zM578 437h1v2h-1zM579 435h1v2h-1zM580 433h1v2h-1zM581 430h1v3h-1zM582 428h1v2h-1zM583 424h1v4h-1zM584 421h1v3h-1zM585 418h1v3h-1zM586 414h1v4h-1zM587 410h1v4h-1zM588 406h1v4h-1zM589 402h1v4h-1zM590 398h1v4h-1zM591 394h1v4h-1zM592 389h1v5h-1zM593 385h1v4h-1zM594 380h1v5h-1zM595 375h1v5h-1zM596 370h1v5h-1zM597 365h1v5h-1zM598 360h1v5h-1zM599 354h1v6h-1zM600 349h1v5h-1zM601 343h1v6h-1zM602 338h1v5h-1zM603 332h1v6h-1zM604 326h1v6h-1zM605 320h1v6h-1zM606 314h1v6h-1zM607 308h1v6h-1zM608 302h1v6h-1zM609 296h1v6h-1zM610 290h1v6h-1zM611 284h1v6h-1zM612 278h1v6h-1zM613 272h1v6h-1zM614 265h1v7h-1zM615 259h1v6h-1zM616 253h1v6h-1zM617 247h1v6h-1zM618 241h1v6h-1zM619 235h1v6h-1zM620 229h1v6h-1zM621 222h1v7h-1zM622 216h1v6h-1zM623 211h1v5h-1zM624 205h1v6h-1zM625 199h1v6h-1zM626 193h1v6h-1zM627 188h1v5h-1zM628 182h1v6h-1zM629 177h1v5h-1zM630 171h1v6h-1zM631 168h1v3h-1zM632 161h1v5h-1zM633 156h1v5h-1zM634 151h1v5h-1zM635 146h1v5h-1zM636 142h1v4h-1zM637 137h1v5h-1zM638 132h1v5h-1zM639 128h1v4h-1zM640 124h1v4h-1zM641 120h1v4h-1zM642 116h1v4h-1zM643 113h1v3h-1zM644 110h1v3h-1zM645 106h1v4h-1zM646 103h1v3h-1zM647 100h1v3h-1zM648 98h1v2h-1zM649 95h1v3h-1zM650 93h1v2h-1zM651 90h1v3h-1zM652 88h1v2h-1zM653 87h1v1h-1zM654 85h1v2h-1zM655 84h1v1h-1zM656 83h1v1h-1zM657 82h1v1h-1zM665 81h1v1h-1zM666 82h1v1h-1zM667 83h1v1h-1zM668 84h1v2h-1zM669 86h1v1h-1zM670 87h1v2h-1zM671 89h1v2h-1zM672 91h1v2h-1zM673 93h1v2h-1zM674 95h1v3h-1zM675 98h1v2h-1zM676 100h1v3h-1zM677 103h1v3h-1zM678 106h1v3h-1zM679 109h1v4h-1zM680 113h1v3h-1zM681 116h1v4h-1zM682 120h1v4h-1zM683 124h1v4h-1zM684 128h1v4h-1zM685 132h1v5h-1zM686 137h1v4h-1zM687 141h1v5h-1zM688 146h1v4h-1zM689 150h1v5h-1zM690 155h1v5h-1zM691 160h1v5h-1zM692 165h1v1h-1zM692 168h1v3h-1zM693 171h1v5h-1zM694 176h1v6h-1zM695 182h1v5h-1zM696 187h1v6h-1zM697 193h1v6h-1zM698 199h1v5h-1zM699 204h1v6h-1zM700 210h1v6h-1zM701 216h1v6h-1zM702 222h1v6h-1zM703 228h1v6h-1zM704 234h1v6h-1zM705 240h1v7h-1zM706 247h1v6h-1zM707 253h1v6h-1zM708 259h1v6h-1zM709 265h1v6h-1zM710 271h1v6h-1zM711 277h1v7h-1zM712 284h1v6h-1zM713 290h1v6h-1zM714 296h1v6h-1zM715 302h1v6h-1zM716 308h1v6h-1zM717 314h1v6h-1zM718 320h1v6h-1zM719 326h1v5h-1zM720 331h1v6h-1zM721 337h1v6h-1zM722 343h1v5h-1zM723 348h1v6h-1zM724 354h1v5h-1zM725 359h1v5h-1zM726 364h1v5h-1zM727 369h1v5h-1zM728 374h1v5h-1zM729 379h1v5h-1zM730 384h1v5h-1zM731 389h1v4h-1zM732 393h1v5h-1zM733 398h1v4h-1zM734 402h1v4h-1zM735 406h1v4h-1zM736 410h1v4h-1zM737 414h1v3h-1zM738 417h1v4h-1zM739 421h1v3h-1zM740 424h1v3h-1zM741 427h1v3h-1zM742 430h1v3h-1zM743 433h1v2h-1zM744 435h1v3h-1zM745 438h1v2h-1zM746 440h1v2h-1zM747 442h1v2h-1zM748 444h1v1h-1zM749 445h1v1h-1zM750 446h1v1h-1zM751 447h1v1h-1zM752 448h1v1h-1zM760 447h1v1h-1zM761 446h1v1h-1zM762 445h1v1h-1zM763 443h1v2h-1zM764 441h1v2h-1zM765 439h1v2h-1zM766 437h1v2h-1zM767 435h1v2h-1zM768 433h1v2h-1zM769 430h1v3h-1zM770 428h1v2h-1zM771 424h1v4h-1zM772 421h1v3h-1zM773 418h1v3h-1zM774 414h1v4h-1zM775 410h1v4h-1zM776 406h1v4h-1zM777 402h1v4h-1zM778 398h1v4h-1zM779 394h1v4h-1zM780 389h1v5h-1zM781 385h1v4h-1zM782 380h1v5h-1zM783 375h1v5h-1zM784 370h1v5h-1zM785 365h1v5h-1zM786 360h1v5h-1zM787 354h1v6h-1zM788 349h1v5h-1zM789 343h1v6h-1zM790 338h1v5h-1zM791 332h1v6h-1zM792 326h1v6h-1zM793 320h1v6h-1zM794 314h1v6h-1zM795 308h1v6h-1zM796 302h1v6h-1zM797 296h1v6h-1zM798 290h1v6h-1zM799 284h1v6h-1zM800 278h1v6h-1zM801 272h1v6h-1zM802 265h1v7h-1zM803 259h1v6h-1zM804 253h1v6h-1zM805 247h1v6h-1zM806 241h1v6h-1zM807 235h1v6h-1zM808 229h1v6h-1zM809 222h1v7h-1zM810 216h1v6h-1zM811 211h1v5h-1zM812 205h1v6h-1zM813 199h1v6h-1zM814 193h1v6h-1zM815 188h1v5h-1zM816 182h1v6h-1zM817 177h1v5h-1zM818 171h1v6h-1zM819 168h1v3h-1zM820 161h1v5h-1zM821 156h1v5h-1zM822 151h1v5h-1zM823 146h1v5h-1zM824 142h1v4h-1zM825 137h1v5h-1zM826 132h1v5h-1zM827 128h1v4h-1zM828 124h1v4h-1zM829 120h1v4h-1zM830 116h1v4h-1zM831 113h1v3h-1zM832 110h1v3h-1zM833 106h1v4h-1zM834 103h1v3h-1zM835 100h1v3h-1zM836 98h1v2h-1zM837 95h1v3h-1zM838 93h1v2h-1zM839 90h1v3h-1zM840 88h1v2h-1zM841 87h1v1h-1zM842 85h1v2h-1zM843 84h1v1h-1zM844 83h1v1h-1zM845 82h1v1h-1zM853 81h1v1h-1zM854 82h1v1h-1zM855 83h1v1h-1zM856 84h1v2h-1zM857 86h1v1h-1zM858 87h1v2h-1zM859 89h1v2h-1zM860 91h1v2h-1zM861 93h1v2h-1zM862 95h1v3h-1zM863 98h1v2h-1zM864 100h1v3h-1zM865 103h1v3h-1zM866 106h1v3h-1zM867 109h1v4h-1zM868 113h1v3h-1zM869 116h1v4h-1zM870 120h1v4h-1zM871 124h1v4h-1zM872 128h1v4h-1zM873 132h1v5h-1zM874 137h1v4h-1zM875 141h1v5h-1zM876 146h1v4h-1zM877 150h1v5h-1zM878 155h1v5h-1zM879 160h1v5h-1zM880 165h1v1h-1zM880 168h1v3h-1zM881 171h1v5h-1zM882 176h1v6h-1zM883 182h1v5h-1zM884 187h1v6h-1zM885 193h1v6h-1zM886 199h1v5h-1zM887 204h1v6h-1zM888 210h1v6h-1zM889 216h1v6h-1zM890 222h1v6h-1zM891 228h1v6h-1zM892 234h1v6h-1zM893 240h1v7h-1zM894 247h1v6h-1zM895 253h1v6h-1zM896 259h1v6h-1zM897 265h1v6h-1zM898 271h1v6h-1zM899 277h1v7h-1zM900 284h1v6h-1zM901 290h1v6h-1zM902 296h1v6h-1zM903 302h1v6h-1zM904 308h1v6h-1zM905 314h1v6h-1zM906 320h1v6h-1zM907 326h1v5h-1zM908 331h1v6h-1zM909 337h1v6h-1zM910 343h1v5h-1zM911 348h1v6h-1zM912 354h1v5h-1zM913 359h1v5h-1zM914 364h1v5h-1zM915 369h1v5h-1zM916 374h1v5h-1zM917 379h1v5h-1zM918 384h1v5h-1zM919 389h1v4h-1zM920 393h1v5h-1zM921 398h1v4h-1zM922 402h1v4h-1zM923 406h1v4h-1zM924 410h1v4h-1zM925 414h1v3h-1zM926 417h1v4h-1zM927 421h1v3h-1zM928 424h1v3h-1zM929 427h1v3h-1zM930 430h1v3h-1zM931 433h1v2h-1zM932 435h1v3h-1zM933 438h1v2h-1zM934 440h1v2h-1zM935 442h1v2h-1zM936 444h1v1h-1zM937 445h1v1h-1zM938 446h1v1h-1zM939 447h1v1h-1zM940 448h1v1h-1zM948 447h1v1h-1zM949 446h1v1h-1zM950 445h1v1h-1zM951 443h1v2h-1zM952 441h1v2h-1zM953 439h1v2h-1zM954 437h1v2h-1zM955 435h1v2h-1zM956 433h1v2h-1zM957 430h1v3h-1zM958 428h1v2h-1zM959 424h1v4h-1zM960 421h1v3h-1zM961 418h1v3h-1zM962 414h1v4h-1zM963 410h1v4h-1zM964 406h1v4h-1zM965 402h1v4h-1zM966 398h1v4h-1zM967 394h1v4h-1zM968 389h1v5h-1zM969 385h1v4h-1zM970 380h1v5h-1zM971 375h1v5h-1zM972 370h1v5h-1zM973 365h1v5h-1zM974 360h1v5h-1zM975 354h1v6h-1zM976 349h1v5h-1zM977 343h1v6h-1zM978 338h1v5h-1zM979 332h1v6h-1zM980 326h1v6h-1zM981 320h1v6h-1zM982 314h1v6h-1zM983 308h1v6h-1zM984 302h1v6h-1zM985 296h1v6h-1zM986 290h1v6h-1zM987 284h1v6h-1zM988 278h1v6h-1zM989 272h1v6h-1zM990 265h1v7h-1zM991 259h1v6h-1zM992 253h1v6h-1zM993 247h1v6h-1zM994 241h1v6h-1zM995 235h1v6h-1zM996 229h1v6h-1zM997 222h1v7h-1zM998 216h1v6h-1zM999 211h1v5h-1zM1000 205h1v6h-1zM1001 199h1v6h-1zM1002 193h1v6h-1zM1003 188h1v5h-1zM1004 182h1v6h-1zM1005 177h1v5h-1zM1006 171h1v6h-1zM1007 168h1v3h-1zM1008 161h1v5h-1zM1009 156h1v5h-1zM1010 151h1v5h-1zM1011 146h1v5h-1zM1012 142h1v4h-1zM1013 137h1v5h-1zM1014 132h1v5h-1zM1015 128h1v4h-1zM1016 124h1v4h-1zM1017 120h1v4h-1zM1018 116h1v4h-1zM1019 113h1v3h-1zM1020 110h1v3h-1zM1021 106h1v4h-1zM1022 103h1v3h-1zM1023 100h1v3h-1zM1024 98h1v2h-1zM1025 95h1v3h-1zM1026 93h1v2h-1zM1027 90h1v3h-1zM1028 88h1v2h-1zM1029 87h1v1h-1zM1030 85h1v2h-1zM1031 84h1v1h-1zM1032 83h1v1h-1zM1033 82h1v1h-1zM1041 81h1v1h-1zM1042 82h1v1h-1zM1043 83h1v1h-1zM1044 84h1v2h-1zM1045 86h1v1h-1zM1046 87h1v2h-1zM1047 89h1v2h-1zM1048 91h1v2h-1zM1049 93h1v2h-1zM1050 95h1v3h-1zM1051 98h1v2h-1zM1052 100h1v3h-1zM1053 103h1v3h-1zM1054 106h1v3h-1zM1055 109h1v4h-1zM1056 113h1v3h-1zM1057 116h1v4h-1zM1058 120h1v4h-1zM1059 124h1v4h-1zM1060 128h1v4h-1zM1061 132h1v5h-1zM1062 137h1v4h-1zM1063 141h1v5h-1zM1064 146h1v4h-1zM1065 150h1v5h-1zM1066 155h1v5h-1zM1067 160h1v5h-1zM1068 165h1v1h-1zM1068 168h1v3h-1zM1069 171h1v5h-1zM1070 176h1v6h-1zM1071 182h1v5h-1zM1072 187h1v6h-1zM1073 193h1v6h-1zM1074 199h1v5h-1zM1075 204h1v6h-1zM1076 210h1v6h-1zM1077 216h1v6h-1zM1078 222h1v6h-1zM1079 228h1v6h-1zM1080 234h1v6h-1zM1081 240h1v7h-1zM1082 247h1v6h-1zM1083 253h1v6h-1zM1084 259h1v6h-1zM1085 265h1v6h-1zM1086 271h1v6h-1zM1087 277h1v7h-1zM1088 284h1v6h-1zM1089 290h1v6h-1zM1090 296h1v6h-1zM1091 302h1v6h-1zM1092 308h1v6h-1zM1093 314h1v6h-1zM1094 320h1v6h-1zM1095 326h1v5h-1zM1096 331h1v6h-1zM1097 337h1v6h-1zM1098 343h1v5h-1zM1099 348h1v6h-1zM1100 354h1v5h-1zM1101 359h1v5h-1zM1102 364h1v5h-1zM1103 369h1v5h-1zM1104 374h1v5h-1zM1105 379h1v5h-1zM1106 384h1v5h-1zM1107 389h1v4h-1zM1108 393h1v5h-1zM1109 398h1v4h-1zM1110 402h1v4h-1zM1111 406h1v4h-1zM1112 410h1v4h-1zM1113 414h1v3h-1zM1114 417h1v4h-1zM1115 421h1v3h-1zM1116 424h1v3h-1zM1117 427h1v3h-1zM1118 430h1v3h-1zM1119 433h1v2h-1zM1120 435h1v3h-1zM1121 438h1v2h-1zM1122 440h1v2h-1zM1123 442h1v2h-1zM1124 444h1v1h-1zM1125 445h1v1h-1zM1126 446h1v1h-1zM1127 447h1v1h-1zM1128 448h1v1h-1zM1136 447h1v1h-1zM1137 446h1v1h-1zM1138 445h1v1h-1zM1139 443h1v2h-1zM1140 441h1v2h-1zM1141 439h1v2h-1zM1142 437h1v2h-1zM1143 435h1v2h-1zM1144 433h1v2h-1zM1145 430h1v3h-1zM1146 428h1v2h-1zM1147 424h1v4h-1zM1148 421h1v3h-1zM1149 418h1v3h-1zM1150 414h1v4h-1zM1151 410h1v4h-1zM1152 406h1v4h-1zM1153 402h1v4h-1zM1154 398h1v4h-1zM1155 394h1v4h-1zM1156 389h1v5h-1zM1157 385h1v4h-1zM1158 380h1v5h-1zM1159 375h1v5h-1zM1160 372h1v3h-1z"/>
<path fill="#0000ff" d="M617 166h90v1h-90zM805 166h90v1h-90zM993 166h90v1h-90zM539 167h73v1h-73zM712 167h88v1h-88zM900 167h88v1h-88zM1088 167h73v1h-73z"/>
<path fill="#00a8a8" d="M539 166h78v1h-78zM707 166h98v1h-98zM895 166h98v1h-98zM1083 166h78v1h-78zM617 167h90v1h-90zM805 167h90v1h-90zM993 167h90v1h-90z"/>
<path fill="#c0c0c0" d="M532 46h629v1h-629zM532 90h8v1h-8zM532 133h8v1h-8zM532 177h8v1h-8zM532 221h8v1h-8zM532 265h8v1h-8zM532 308h8v1h-8zM532 352h8v1h-8zM532 396h8v1h-8zM532 439h8v1h-8zM532 483h629v1h-629zM539 47h1v43h-1zM539 91h1v42h-1zM539 134h1v43h-1zM539 178h1v43h-1zM539 222h1v43h-1zM539 266h1v42h-1zM539 309h1v43h-1zM539 353h1v43h-1zM539 397h1v42h-1zM539 440h1v43h-1zM539 484h1v7h-1zM642 484h1v7h-1zM746 484h1v7h-1zM849 484h1v7h-1zM953 484h1v7h-1zM1056 484h1v7h-1zM1160 47h1v436h-1zM1160 484h1v7h-1z"/>
</g>
<g class="lbl" filter="url(#th)">
<text x="38.5" y="75" style="font-size:10px;fill:#000080">+</text>
<text x="82.56" y="43" textLength="13">R2</text>
<text x="84.02" y="70" textLength="12">10</text>
<text x="59.76" y="71" textLength="13">V1</text>
<text x="58.52" y="111" textLength="13">9V</text>
<text x="132.38" y="75" textLength="13">C3</text>
<text x="131.79" y="97" textLength="24">220µ</text>
<text x="189.16" y="68" textLength="13">R3</text>
<text x="189.27" y="84" textLength="12">47</text>
<text x="225.16" y="68" textLength="13">R4</text>
<text x="224.99" y="84" textLength="17">22k</text>
<text x="282.96" y="68" textLength="13">R5</text>
<text x="282.79" y="84" textLength="32">22.01k</text>
<text x="123.06" y="179" textLength="47">BC327-25</text>
<text x="156.72" y="195" textLength="14">Q1</text>
<text x="320.36" y="179" textLength="47">BC327-25</text>
<text x="320.72" y="195" textLength="14">Q2</text>
<text x="78.37" y="224" textLength="104.5">.tran 0 100m 0 .5u uic</text>
<text x="198.66" y="218" textLength="13">R6</text>
<text x="196.77" y="245" textLength="17">47k</text>
<text x="278.66" y="218" textLength="13">R7</text>
<text x="276.57" y="245" textLength="17">47k</text>
<text x="341.06" y="233" textLength="19">R13</text>
<text x="340.62" y="259" textLength="23">100k</text>
<text x="421.58" y="247" textLength="33">Comp+</text>
<text x="149.46" y="262" textLength="18">Left</text>
<text x="139.98" y="272" textLength="13">C2</text>
<text x="138.99" y="293" textLength="12">2µ</text>
<text x="214.46" y="257" textLength="12">L1</text>
<text x="204.01" y="281" textLength="31">300µH</text>
<text x="256.56" y="255" textLength="13">R1</text>
<text x="254.8" y="281" textLength="15">0.5</text>
<text x="319.06" y="262" textLength="24">Right</text>
<text x="351.58" y="272" textLength="13">C1</text>
<text x="350.99" y="293" textLength="12">2µ</text>
<text x="394.58" y="272" textLength="13">C4</text>
<text x="394.82" y="293" textLength="18">10n</text>
<text x="195.36" y="298" textLength="19">R12</text>
<text x="196.27" y="325" textLength="17">47k</text>
<text x="275.46" y="298" textLength="19">R11</text>
<text x="276.57" y="325" textLength="17">47k</text>
<text x="341.06" y="313" textLength="19">R14</text>
<text x="339.92" y="340" textLength="23">100k</text>
<text x="421.18" y="327" textLength="30">Comp-</text>
<text x="170.22" y="348" textLength="14">Q4</text>
<text x="136.36" y="365" textLength="47">BC337-25</text>
<text x="307.92" y="348" textLength="14">Q3</text>
<text x="307.56" y="365" textLength="47">BC337-25</text>
<text x="188.36" y="459" textLength="19">R10</text>
<text x="173.69" y="476" textLength="32">22.02k</text>
<text x="252.36" y="459" textLength="13">R9</text>
<text x="246.89" y="476" textLength="17">22k</text>
<text x="289.16" y="459" textLength="13">R8</text>
<text x="290.27" y="476" textLength="12">47</text>
</g>
<g class="auth" filter="url(#th)">
<text transform="translate(83.7 441.2) rotate(-90)" textLength="87.5">Author: Davor V.</text>
<text transform="translate(97 441.2) rotate(-90)" textLength="195">contact: davorslistdepot@gmail.com</text>
<text transform="translate(110.2 441.2) rotate(-90)" textLength="194.5">or private message at Geotech forum</text>
</g>
<g class="ax" filter="url(#th)">
<text x="507.64" y="51" textLength="23.66" lengthAdjust="spacingAndGlyphs">10V</text>
<text x="515.03" y="95" textLength="16.27" lengthAdjust="spacingAndGlyphs">8V</text>
<text x="515.03" y="138" textLength="16.27" lengthAdjust="spacingAndGlyphs">6V</text>
<text x="515.03" y="182" textLength="16.27" lengthAdjust="spacingAndGlyphs">4V</text>
<text x="515.03" y="226" textLength="16.27" lengthAdjust="spacingAndGlyphs">2V</text>
<text x="515.03" y="270" textLength="16.27" lengthAdjust="spacingAndGlyphs">0V</text>
<text x="510.6" y="313" textLength="20.7" lengthAdjust="spacingAndGlyphs">-2V</text>
<text x="510.6" y="357" textLength="20.7" lengthAdjust="spacingAndGlyphs">-4V</text>
<text x="510.6" y="401" textLength="20.7" lengthAdjust="spacingAndGlyphs">-6V</text>
<text x="510.6" y="444" textLength="20.7" lengthAdjust="spacingAndGlyphs">-8V</text>
<text x="503.21" y="488" textLength="28.09" lengthAdjust="spacingAndGlyphs">-10V</text>
<text x="511.7" y="504" textLength="54.5">29.97ms</text>
<text x="614.7" y="504" textLength="54.5">30.03ms</text>
<text x="718.7" y="504" textLength="54.5">30.09ms</text>
<text x="821.7" y="504" textLength="54.5">30.15ms</text>
<text x="925.7" y="504" textLength="54.5">30.21ms</text>
<text x="1028.7" y="504" textLength="54.5">30.27ms</text>
<text x="1133" y="504" textLength="54.5">30.33ms</text>
</g>
<g class="lg" filter="url(#th)">
<text x="577.5" y="41" fill="#ff0000" textLength="77.5" lengthAdjust="spacingAndGlyphs">V(Left,Right)</text>
<text x="704" y="41" fill="#00ff00" textLength="133.5" lengthAdjust="spacingAndGlyphs">V(comp+,Comp-)*115</text>
<text x="896.5" y="41" fill="#0000ff" textLength="58" lengthAdjust="spacingAndGlyphs">V(comp+)</text>
<text x="1053" y="41" fill="#00b0c0" textLength="54.5" lengthAdjust="spacingAndGlyphs">V(comp-)</text>
</g>
</svg></body></html>
